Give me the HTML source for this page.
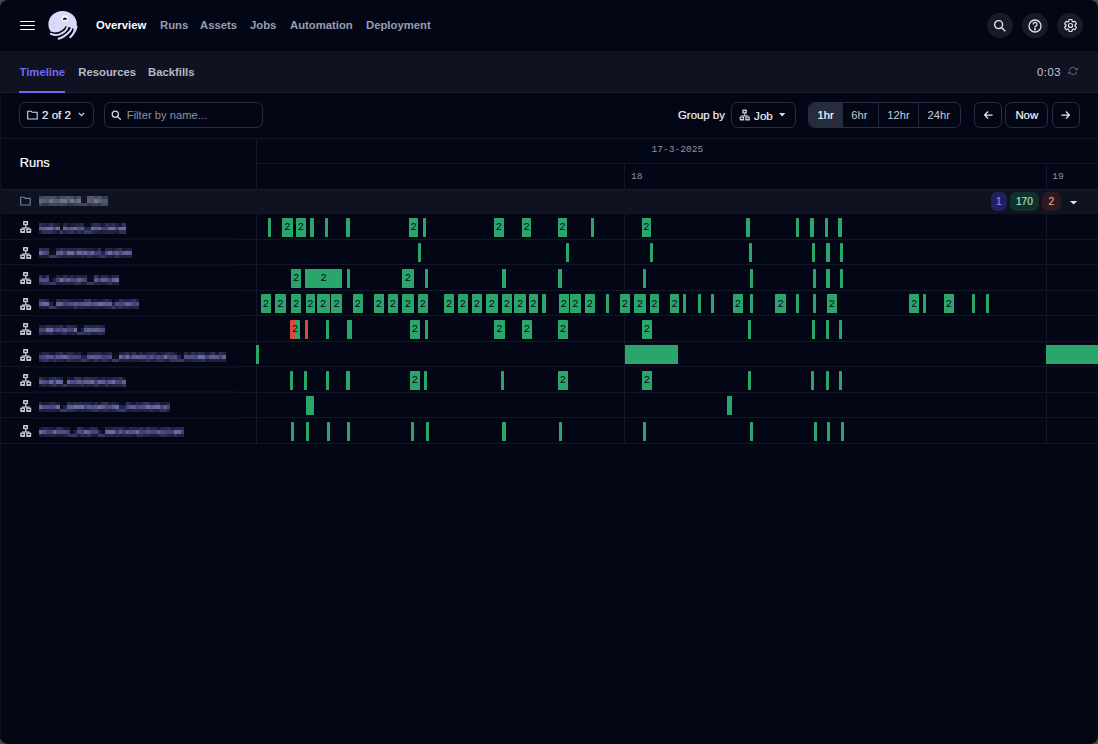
<!DOCTYPE html>
<html><head><meta charset="utf-8"><style>
html,body{margin:0;padding:0;background:#474745;}
body{width:1098px;height:744px;overflow:hidden;position:relative;font-family:"Liberation Sans",sans-serif;}
#win{position:absolute;left:0;top:0;width:1098px;height:744px;background:#030615;border-radius:8px;overflow:hidden;}
.abs{position:absolute;}
.t{position:absolute;white-space:nowrap;line-height:1;}
.nav{font-weight:700;font-size:11.3px;color:#979eb2;top:19.6px;}
.tab{font-weight:700;font-size:11.3px;color:#b6bac6;top:66.7px;}
.btn{position:absolute;border:1px solid #292f40;border-radius:6.4px;box-sizing:border-box;}
.hl{position:absolute;left:0;width:1098px;height:1px;background:#131626;}
.vl{position:absolute;width:1px;background:#131626;}
.bar{position:absolute;border-radius:0.6px;}
.bar span{position:absolute;left:0;right:0;top:4.5px;text-align:center;font-family:"Liberation Mono",monospace;font-size:10.4px;line-height:1;color:#050814;}
.circ{position:absolute;width:25.6px;height:25.6px;border-radius:50%;background:#171b29;top:12.7px;}
i{position:absolute;width:3.47px;display:block;}
.jicon{position:absolute;left:16px;width:20px;height:18px;}
.mono{font-family:"Liberation Mono",monospace;font-size:9.6px;color:#8d93a6;}
.badge{position:absolute;top:192px;height:19.2px;border-radius:6px;font-size:10.2px;line-height:19.2px;text-align:center;-webkit-text-stroke:0.15px currentColor;}
</style></head><body><div id="win">
<!-- top nav -->
<div class="abs" style="left:20.2px;top:20.7px;width:14.6px;height:1.5px;background:#fff;border-radius:1px"></div>
<div class="abs" style="left:20.2px;top:24.7px;width:14.6px;height:1.5px;background:#fff;border-radius:1px"></div>
<div class="abs" style="left:20.2px;top:28.7px;width:14.6px;height:1.5px;background:#fff;border-radius:1px"></div>
<svg class="abs" style="left:44px;top:8px" width="36" height="34" viewBox="44 8 36 34">
 <ellipse cx="62.6" cy="24.3" rx="14.2" ry="13.4" fill="#dcdafb"/>
 <path d="M44 31.3 L50.2 31.6 C 54 32.8, 57.5 32.6, 60 31.2 C 62.5 30, 64.8 28.2, 65.8 26 L69.6 27.3 L73.2 28.2 C 74 29.5, 73.5 31.8, 72.2 33.4 S 70 36, 68.6 37.6 L 66 42 L44 42 Z" fill="#030615"/>
 <path d="M50.9 33.9 C 53 34.9, 56.5 35.3, 58.9 34.6 C 61.5 33.8, 63.4 32.7, 64.6 31.6 C 66 30.2, 67.2 28.4, 67.7 26.8" stroke="#dcdafb" stroke-width="2" fill="none" stroke-linecap="round"/>
 <path d="M58.6 38.7 C 60.8 38.1, 62.8 37.2, 64.6 35.9 C 66.8 34.4, 68.8 32.6, 69.9 31.2 C 70.6 30.2, 71.2 29.2, 71.6 28" stroke="#dcdafb" stroke-width="2" fill="none" stroke-linecap="round"/>
 <path d="M70.2 37.2 C 71.4 36.2, 72.4 35.1, 73.1 33.9 C 74 32.6, 74.8 31.4, 75.3 30.2 C 75.9 29, 76.3 27.8, 76.6 26.4" stroke="#dcdafb" stroke-width="2" fill="none" stroke-linecap="round"/>
 <circle cx="65" cy="18.4" r="3" fill="#ffffff"/>
 <path d="M62.9 19.7 C 62.9 16.6, 66.9 16.6, 66.9 19.7 z" fill="#030615"/>
 <circle cx="53.8" cy="22.6" r="0.95" fill="#c5bef3"/><circle cx="51.3" cy="24.9" r="0.95" fill="#c5bef3"/><circle cx="53.8" cy="27.2" r="0.95" fill="#c5bef3"/>
</svg>
<div class="t nav" style="left:96px;color:#fff">Overview</div>
<div class="t nav" style="left:160px">Runs</div>
<div class="t nav" style="left:200px">Assets</div>
<div class="t nav" style="left:250px">Jobs</div>
<div class="t nav" style="left:290px">Automation</div>
<div class="t nav" style="left:366px">Deployment</div>
<div class="circ" style="left:987.2px"></div>
<div class="circ" style="left:1022.2px"></div>
<div class="circ" style="left:1057.2px"></div>
<svg class="abs" style="left:993px;top:19px" width="14" height="14" viewBox="0 0 14 14" fill="none" stroke="#e3e5ea" stroke-width="1.4"><circle cx="5.6" cy="5.6" r="4"/><path d="M8.5 8.5L12.3 12.3"/></svg>
<svg class="abs" style="left:1028px;top:18.5px" width="14" height="14" viewBox="0 0 14 14" fill="none" stroke="#e3e5ea" stroke-width="1.3"><circle cx="7" cy="7" r="6"/><path d="M5.1 5.4a1.95 1.95 0 1 1 2.6 1.8c-.5.2-.7.5-.7 1v.6"/><circle cx="7" cy="10.3" r=".5" fill="#e3e5ea"/></svg>
<svg class="abs" style="left:1062.5px;top:18px" width="15" height="15" viewBox="0 0 24 24" fill="none" stroke="#e3e5ea" stroke-width="1.9" stroke-linejoin="round"><path d="M19.14 12.94c.04-.3.06-.61.06-.94 0-.32-.02-.64-.07-.94l2.03-1.58c.18-.14.23-.41.12-.61l-1.92-3.32c-.12-.22-.37-.29-.59-.22l-2.39.96c-.5-.38-1.03-.7-1.62-.94l-.36-2.54c-.04-.24-.24-.41-.48-.41h-3.84c-.24 0-.43.17-.47.41l-.36 2.54c-.59.24-1.13.57-1.620.94l-2.39-.96c-.22-.08-.47 0-.59.22L2.74 8.87c-.12.21-.08.47.12.61l2.03 1.58c-.05.3-.09.63-.09.94s.02.64.07.94l-2.03 1.58c-.18.14-.23.41-.12.61l1.92 3.32c.12.22.37.29.59.22l2.39-.96c.5.38 1.030.7 1.62.94l.36 2.54c.05.24.24.41.48.41h3.84c.24 0 .44-.17.47-.41l.36-2.54c.59-.24 1.13-.56 1.62-.94l2.39.96c.22.08.47 0 .59-.22l1.92-3.32c.12-.22.07-.47-.12-.61l-2.01-1.58z"/><circle cx="12" cy="12" r="3.2"/></svg>
<!-- tabs bar -->
<div class="abs" style="left:0;top:51.2px;width:1098px;height:41.3px;background:#0f1220"></div>
<div class="abs" style="left:0;top:92.2px;width:1098px;height:1px;background:#1b2030"></div>
<div class="t tab" style="left:19.5px;color:#746aef">Timeline</div>
<div class="t tab" style="left:78.3px">Resources</div>
<div class="t tab" style="left:148px">Backfills</div>
<div class="abs" style="left:19px;top:90.6px;width:46px;height:2.2px;background:#746aef"></div>
<div class="t" style="left:1037px;top:67px;font-size:11.2px;letter-spacing:0.55px;color:#c4c8d2">0:03</div>
<svg class="abs" style="left:1067px;top:66px" width="12" height="10" viewBox="0 0 12 10" fill="none" stroke="#6b7285" stroke-width="1"><path d="M2.3 4.3A3.7 3.7 0 0 1 9.2 3.4M9.7 5.7A3.7 3.7 0 0 1 2.8 6.6"/><path d="M10.3 1.9v2H8.3M1.7 8.1v-2h2"/></svg>
<!-- toolbar -->
<div class="btn" style="left:19.1px;top:102.4px;width:74.7px;height:25.6px"></div>
<svg class="abs" style="left:26.5px;top:109.5px" width="11" height="10" viewBox="0 0 11 10" fill="none" stroke="#d8dbe2" stroke-width="1.1"><path d="M0.7 1.2h3.5l1 1.1h5v6.7h-9.5z"/></svg>
<div class="t" style="left:42px;top:109.4px;font-size:11.6px;color:#f2f3f6;-webkit-text-stroke:0.2px #f2f3f6">2 of 2</div>
<svg class="abs" style="left:78px;top:112px" width="7" height="5" viewBox="0 0 7 5" fill="none" stroke="#d8dbe2" stroke-width="1.2"><path d="M0.8 0.9L3.5 3.6L6.2 0.9"/></svg>
<div class="btn" style="left:104.2px;top:102.4px;width:159.3px;height:25.6px"></div>
<svg class="abs" style="left:111px;top:109.5px" width="11" height="11" viewBox="0 0 11 11" fill="none" stroke="#d6d9e0" stroke-width="1.25"><circle cx="4.3" cy="4.3" r="3.1"/><path d="M6.6 6.6L9.8 9.8"/></svg>
<div class="t" style="left:126.8px;top:109.8px;font-size:11.2px;color:#8b91a3">Filter by name...</div>
<div class="t" style="left:678px;top:110.1px;font-size:11.4px;color:#eef0f4;-webkit-text-stroke:0.2px #eef0f4">Group by</div>
<div class="btn" style="left:731.2px;top:102.3px;width:64.4px;height:25.6px"></div>
<div class="abs" style="left:734.5px;top:106px;transform:scale(0.92);transform-origin:10px 9px"><svg width="20" height="18" viewBox="0 0 20 18"><g fill="#c6c9d2"><rect x="7" y="2.9" width="5.1" height="4.4" rx="0.7"/><rect x="9.1" y="7" width="1.3" height="3"/><rect x="5.9" y="9.4" width="7.7" height="1.3"/><rect x="4.2" y="10.5" width="5" height="4.5" rx="0.7"/><rect x="10.2" y="10.5" width="5" height="4.5" rx="0.7"/></g><g fill="#030615"><ellipse cx="9.55" cy="5.3" rx="1.2" ry="0.7"/><ellipse cx="6.7" cy="12.6" rx="1.2" ry="0.75"/><ellipse cx="12.7" cy="12.6" rx="1.2" ry="0.75"/><rect x="9.35" y="10.7" width="0.7" height="4.4"/></g></svg></div>
<div class="t" style="left:754.1px;top:110.1px;font-size:11.6px;color:#eef0f4;-webkit-text-stroke:0.2px #eef0f4">Job</div>
<svg class="abs" style="left:779.4px;top:113px" width="7" height="4" viewBox="0 0 7 4"><path d="M0 0H6.4L3.2 3.6z" fill="#d8dbe2"/></svg>
<div class="btn" style="left:808.1px;top:102.3px;width:152.6px;height:25.6px"></div>
<div class="abs" style="left:808.6px;top:102.8px;width:33.6px;height:24.6px;background:#262c3e;border-radius:6px 0 0 6px"></div>
<div class="abs" style="left:842.2px;top:102.3px;width:1px;height:25.2px;background:#242a3a"></div>
<div class="abs" style="left:877.5px;top:102.3px;width:1px;height:25.2px;background:#242a3a"></div>
<div class="abs" style="left:918.2px;top:102.3px;width:1px;height:25.2px;background:#242a3a"></div>
<div class="t" style="left:817.6px;top:110.1px;font-size:11.2px;color:#fff;-webkit-text-stroke:0.2px #fff">1hr</div>
<div class="t" style="left:851.3px;top:110.1px;font-size:11.2px;color:#c9cdd6">6hr</div>
<div class="t" style="left:887.3px;top:110.1px;font-size:11.2px;color:#c9cdd6">12hr</div>
<div class="t" style="left:927.6px;top:110.1px;font-size:11.2px;color:#c9cdd6">24hr</div>
<div class="btn" style="left:974.1px;top:102.3px;width:27.5px;height:25.6px"></div>
<svg class="abs" style="left:983px;top:109.5px" width="11" height="10" viewBox="0 0 11 10" fill="none" stroke="#e6e8ed" stroke-width="1.25"><path d="M9.6 5H1.8M5.1 1.5L1.6 5L5.1 8.5"/></svg>
<div class="btn" style="left:1005.3px;top:102.3px;width:42.4px;height:25.6px"></div>
<div class="t" style="left:1015.4px;top:110.1px;font-size:11.4px;color:#eef0f4;-webkit-text-stroke:0.2px #eef0f4">Now</div>
<div class="btn" style="left:1052.1px;top:102.3px;width:27.7px;height:25.6px"></div>
<svg class="abs" style="left:1060px;top:109.5px" width="11" height="10" viewBox="0 0 11 10" fill="none" stroke="#e6e8ed" stroke-width="1.25"><path d="M1.4 5H9.2M5.9 1.5L9.4 5L5.9 8.5"/></svg>
<!-- timeline header -->
<div class="hl" style="top:138.3px"></div>
<div class="abs" style="left:256.9px;top:163px;width:841px;height:1px;background:#131626"></div>
<div class="vl" style="left:256px;top:138.8px;height:306px"></div>
<div class="vl" style="left:624.2px;top:163.5px;height:25.5px"></div>
<div class="vl" style="left:1046.2px;top:163.5px;height:25.5px"></div>
<div class="vl" style="left:624.2px;top:213.7px;height:230px"></div>
<div class="vl" style="left:1046.2px;top:213.7px;height:230px"></div>
<div class="t" style="left:19.8px;top:156.9px;font-size:12.8px;color:#fff;-webkit-text-stroke:0.2px #fff">Runs</div>
<div class="t mono" style="left:651.5px;top:145.4px">17-3-2025</div>
<div class="t mono" style="left:631px;top:171.7px">18</div>
<div class="t mono" style="left:1052.3px;top:171.7px">19</div>
<!-- group row -->
<div class="abs" style="left:0;top:188.9px;width:1098px;height:24.8px;background:#0f1220"></div>
<div class="hl" style="top:188.6px;background:#1b2030"></div>
<svg class="abs" style="left:20px;top:196.4px" width="11" height="10" viewBox="0 0 11 10" fill="none" stroke="#717c92" stroke-width="1.15"><path d="M0.7 1.2h3.5l1 1.1h5v6.7h-9.5z"/></svg>
<div class="badge" style="left:990.9px;width:15.9px;background:#24215a;color:#8f87ff">1</div>
<div class="badge" style="left:1010.1px;width:28.7px;background:#11302a;color:#a5e9c5">170</div>
<div class="badge" style="left:1042px;width:18.8px;background:#2d1a20;color:#f29a86">2</div>
<svg class="abs" style="left:1069.8px;top:201px" width="8" height="4" viewBox="0 0 8 4"><path d="M0 0H7.2L3.6 3.6z" fill="#e6e8ed"/></svg>
<div class="hl" style="top:213.20px"></div><div class="hl" style="top:238.70px;left:0;width:32px"></div><div class="hl" style="top:238.70px;left:238px;width:860px"></div><div class="hl" style="top:238.20px;left:32px;width:206px;height:2px;background:#0b0e1c"></div><div class="hl" style="top:264.20px;left:0;width:32px"></div><div class="hl" style="top:264.20px;left:238px;width:860px"></div><div class="hl" style="top:263.70px;left:32px;width:206px;height:2px;background:#0b0e1c"></div><div class="hl" style="top:289.70px;left:0;width:32px"></div><div class="hl" style="top:289.70px;left:238px;width:860px"></div><div class="hl" style="top:289.20px;left:32px;width:206px;height:2px;background:#0b0e1c"></div><div class="hl" style="top:315.20px;left:0;width:32px"></div><div class="hl" style="top:315.20px;left:238px;width:860px"></div><div class="hl" style="top:314.70px;left:32px;width:206px;height:2px;background:#0b0e1c"></div><div class="hl" style="top:340.70px;left:0;width:32px"></div><div class="hl" style="top:340.70px;left:238px;width:860px"></div><div class="hl" style="top:340.20px;left:32px;width:206px;height:2px;background:#0b0e1c"></div><div class="hl" style="top:366.20px;left:0;width:32px"></div><div class="hl" style="top:366.20px;left:238px;width:860px"></div><div class="hl" style="top:365.70px;left:32px;width:206px;height:2px;background:#0b0e1c"></div><div class="hl" style="top:391.70px;left:0;width:32px"></div><div class="hl" style="top:391.70px;left:238px;width:860px"></div><div class="hl" style="top:391.20px;left:32px;width:206px;height:2px;background:#0b0e1c"></div><div class="hl" style="top:417.20px;left:0;width:32px"></div><div class="hl" style="top:417.20px;left:238px;width:860px"></div><div class="hl" style="top:416.70px;left:32px;width:206px;height:2px;background:#0b0e1c"></div><div class="hl" style="top:442.70px"></div>
<div class="jicon" style="top:218.00px"><svg width="20" height="18" viewBox="0 0 20 18"><g fill="#c6c9d2"><rect x="7" y="2.9" width="5.1" height="4.4" rx="0.7"/><rect x="9.1" y="7" width="1.3" height="3"/><rect x="5.9" y="9.4" width="7.7" height="1.3"/><rect x="4.2" y="10.5" width="5" height="4.5" rx="0.7"/><rect x="10.2" y="10.5" width="5" height="4.5" rx="0.7"/></g><g fill="#030615"><ellipse cx="9.55" cy="5.3" rx="1.2" ry="0.7"/><ellipse cx="6.7" cy="12.6" rx="1.2" ry="0.75"/><ellipse cx="12.7" cy="12.6" rx="1.2" ry="0.75"/><rect x="9.35" y="10.7" width="0.7" height="4.4"/></g></svg></div><div class="jicon" style="top:243.50px"><svg width="20" height="18" viewBox="0 0 20 18"><g fill="#c6c9d2"><rect x="7" y="2.9" width="5.1" height="4.4" rx="0.7"/><rect x="9.1" y="7" width="1.3" height="3"/><rect x="5.9" y="9.4" width="7.7" height="1.3"/><rect x="4.2" y="10.5" width="5" height="4.5" rx="0.7"/><rect x="10.2" y="10.5" width="5" height="4.5" rx="0.7"/></g><g fill="#030615"><ellipse cx="9.55" cy="5.3" rx="1.2" ry="0.7"/><ellipse cx="6.7" cy="12.6" rx="1.2" ry="0.75"/><ellipse cx="12.7" cy="12.6" rx="1.2" ry="0.75"/><rect x="9.35" y="10.7" width="0.7" height="4.4"/></g></svg></div><div class="jicon" style="top:269.00px"><svg width="20" height="18" viewBox="0 0 20 18"><g fill="#c6c9d2"><rect x="7" y="2.9" width="5.1" height="4.4" rx="0.7"/><rect x="9.1" y="7" width="1.3" height="3"/><rect x="5.9" y="9.4" width="7.7" height="1.3"/><rect x="4.2" y="10.5" width="5" height="4.5" rx="0.7"/><rect x="10.2" y="10.5" width="5" height="4.5" rx="0.7"/></g><g fill="#030615"><ellipse cx="9.55" cy="5.3" rx="1.2" ry="0.7"/><ellipse cx="6.7" cy="12.6" rx="1.2" ry="0.75"/><ellipse cx="12.7" cy="12.6" rx="1.2" ry="0.75"/><rect x="9.35" y="10.7" width="0.7" height="4.4"/></g></svg></div><div class="jicon" style="top:294.50px"><svg width="20" height="18" viewBox="0 0 20 18"><g fill="#c6c9d2"><rect x="7" y="2.9" width="5.1" height="4.4" rx="0.7"/><rect x="9.1" y="7" width="1.3" height="3"/><rect x="5.9" y="9.4" width="7.7" height="1.3"/><rect x="4.2" y="10.5" width="5" height="4.5" rx="0.7"/><rect x="10.2" y="10.5" width="5" height="4.5" rx="0.7"/></g><g fill="#030615"><ellipse cx="9.55" cy="5.3" rx="1.2" ry="0.7"/><ellipse cx="6.7" cy="12.6" rx="1.2" ry="0.75"/><ellipse cx="12.7" cy="12.6" rx="1.2" ry="0.75"/><rect x="9.35" y="10.7" width="0.7" height="4.4"/></g></svg></div><div class="jicon" style="top:320.00px"><svg width="20" height="18" viewBox="0 0 20 18"><g fill="#c6c9d2"><rect x="7" y="2.9" width="5.1" height="4.4" rx="0.7"/><rect x="9.1" y="7" width="1.3" height="3"/><rect x="5.9" y="9.4" width="7.7" height="1.3"/><rect x="4.2" y="10.5" width="5" height="4.5" rx="0.7"/><rect x="10.2" y="10.5" width="5" height="4.5" rx="0.7"/></g><g fill="#030615"><ellipse cx="9.55" cy="5.3" rx="1.2" ry="0.7"/><ellipse cx="6.7" cy="12.6" rx="1.2" ry="0.75"/><ellipse cx="12.7" cy="12.6" rx="1.2" ry="0.75"/><rect x="9.35" y="10.7" width="0.7" height="4.4"/></g></svg></div><div class="jicon" style="top:345.50px"><svg width="20" height="18" viewBox="0 0 20 18"><g fill="#c6c9d2"><rect x="7" y="2.9" width="5.1" height="4.4" rx="0.7"/><rect x="9.1" y="7" width="1.3" height="3"/><rect x="5.9" y="9.4" width="7.7" height="1.3"/><rect x="4.2" y="10.5" width="5" height="4.5" rx="0.7"/><rect x="10.2" y="10.5" width="5" height="4.5" rx="0.7"/></g><g fill="#030615"><ellipse cx="9.55" cy="5.3" rx="1.2" ry="0.7"/><ellipse cx="6.7" cy="12.6" rx="1.2" ry="0.75"/><ellipse cx="12.7" cy="12.6" rx="1.2" ry="0.75"/><rect x="9.35" y="10.7" width="0.7" height="4.4"/></g></svg></div><div class="jicon" style="top:371.00px"><svg width="20" height="18" viewBox="0 0 20 18"><g fill="#c6c9d2"><rect x="7" y="2.9" width="5.1" height="4.4" rx="0.7"/><rect x="9.1" y="7" width="1.3" height="3"/><rect x="5.9" y="9.4" width="7.7" height="1.3"/><rect x="4.2" y="10.5" width="5" height="4.5" rx="0.7"/><rect x="10.2" y="10.5" width="5" height="4.5" rx="0.7"/></g><g fill="#030615"><ellipse cx="9.55" cy="5.3" rx="1.2" ry="0.7"/><ellipse cx="6.7" cy="12.6" rx="1.2" ry="0.75"/><ellipse cx="12.7" cy="12.6" rx="1.2" ry="0.75"/><rect x="9.35" y="10.7" width="0.7" height="4.4"/></g></svg></div><div class="jicon" style="top:396.50px"><svg width="20" height="18" viewBox="0 0 20 18"><g fill="#c6c9d2"><rect x="7" y="2.9" width="5.1" height="4.4" rx="0.7"/><rect x="9.1" y="7" width="1.3" height="3"/><rect x="5.9" y="9.4" width="7.7" height="1.3"/><rect x="4.2" y="10.5" width="5" height="4.5" rx="0.7"/><rect x="10.2" y="10.5" width="5" height="4.5" rx="0.7"/></g><g fill="#030615"><ellipse cx="9.55" cy="5.3" rx="1.2" ry="0.7"/><ellipse cx="6.7" cy="12.6" rx="1.2" ry="0.75"/><ellipse cx="12.7" cy="12.6" rx="1.2" ry="0.75"/><rect x="9.35" y="10.7" width="0.7" height="4.4"/></g></svg></div><div class="jicon" style="top:422.00px"><svg width="20" height="18" viewBox="0 0 20 18"><g fill="#c6c9d2"><rect x="7" y="2.9" width="5.1" height="4.4" rx="0.7"/><rect x="9.1" y="7" width="1.3" height="3"/><rect x="5.9" y="9.4" width="7.7" height="1.3"/><rect x="4.2" y="10.5" width="5" height="4.5" rx="0.7"/><rect x="10.2" y="10.5" width="5" height="4.5" rx="0.7"/></g><g fill="#030615"><ellipse cx="9.55" cy="5.3" rx="1.2" ry="0.7"/><ellipse cx="6.7" cy="12.6" rx="1.2" ry="0.75"/><ellipse cx="12.7" cy="12.6" rx="1.2" ry="0.75"/><rect x="9.35" y="10.7" width="0.7" height="4.4"/></g></svg></div>
<i style="left:39.00px;top:196.00px;height:3.2px;background:rgba(70,80,100,0.85)"></i><i style="left:39.00px;top:199.20px;height:3.9px;background:rgba(115,120,130,0.9)"></i><i style="left:39.00px;top:203.10px;height:3.1px;background:rgba(80,88,105,0.8)"></i><i style="left:42.46px;top:196.00px;height:3.2px;background:rgba(80,90,110,0.85)"></i><i style="left:42.46px;top:199.20px;height:3.9px;background:rgba(96,104,120,0.9)"></i><i style="left:42.46px;top:203.10px;height:3.1px;background:rgba(60,68,88,0.8)"></i><i style="left:45.92px;top:196.00px;height:3.2px;background:rgba(80,90,110,0.85)"></i><i style="left:45.92px;top:199.20px;height:3.9px;background:rgba(84,98,118,0.9)"></i><i style="left:45.92px;top:203.10px;height:3.1px;background:rgba(60,68,88,0.8)"></i><i style="left:49.38px;top:196.00px;height:3.2px;background:rgba(80,90,110,0.85)"></i><i style="left:49.38px;top:199.20px;height:3.9px;background:rgba(124,128,134,0.9)"></i><i style="left:49.38px;top:203.10px;height:3.1px;background:rgba(70,80,100,0.8)"></i><i style="left:52.84px;top:196.00px;height:3.2px;background:rgba(80,90,110,0.85)"></i><i style="left:52.84px;top:199.20px;height:3.9px;background:rgba(96,104,120,0.9)"></i><i style="left:52.84px;top:203.10px;height:3.1px;background:rgba(80,88,105,0.8)"></i><i style="left:56.30px;top:196.00px;height:3.2px;background:rgba(60,70,90,0.85)"></i><i style="left:56.30px;top:199.20px;height:3.9px;background:rgba(96,104,120,0.9)"></i><i style="left:56.30px;top:203.10px;height:3.1px;background:rgba(70,80,100,0.8)"></i><i style="left:59.76px;top:196.00px;height:3.2px;background:rgba(80,90,110,0.85)"></i><i style="left:59.76px;top:199.20px;height:3.9px;background:rgba(124,128,134,0.9)"></i><i style="left:59.76px;top:203.10px;height:3.1px;background:rgba(80,88,105,0.8)"></i><i style="left:63.22px;top:196.00px;height:3.2px;background:rgba(80,90,110,0.85)"></i><i style="left:63.22px;top:199.20px;height:3.9px;background:rgba(124,128,134,0.9)"></i><i style="left:63.22px;top:203.10px;height:3.1px;background:rgba(70,80,100,0.8)"></i><i style="left:66.68px;top:196.00px;height:3.2px;background:rgba(95,100,115,0.85)"></i><i style="left:66.68px;top:199.20px;height:3.9px;background:rgba(88,94,108,0.9)"></i><i style="left:66.68px;top:203.10px;height:3.1px;background:rgba(60,68,88,0.8)"></i><i style="left:70.14px;top:196.00px;height:3.2px;background:rgba(80,90,110,0.85)"></i><i style="left:70.14px;top:199.20px;height:3.9px;background:rgba(124,128,134,0.9)"></i><i style="left:70.14px;top:203.10px;height:3.1px;background:rgba(60,68,88,0.8)"></i><i style="left:73.60px;top:196.00px;height:3.2px;background:rgba(60,70,90,0.85)"></i><i style="left:73.60px;top:199.20px;height:3.9px;background:rgba(96,104,120,0.9)"></i><i style="left:73.60px;top:203.10px;height:3.1px;background:rgba(70,80,100,0.8)"></i><i style="left:77.06px;top:196.00px;height:3.2px;background:rgba(80,90,110,0.85)"></i><i style="left:77.06px;top:199.20px;height:3.9px;background:rgba(124,128,134,0.9)"></i><i style="left:77.06px;top:203.10px;height:3.1px;background:rgba(70,80,100,0.8)"></i><i style="left:80.52px;top:196.00px;height:3.2px;background:rgba(20,22,35,1)"></i><i style="left:80.52px;top:199.20px;height:3.9px;background:rgba(20,22,35,1)"></i><i style="left:80.52px;top:203.10px;height:3.1px;background:rgba(70,80,100,0.8)"></i><i style="left:83.98px;top:196.00px;height:3.2px;background:rgba(20,22,35,1)"></i><i style="left:83.98px;top:199.20px;height:3.9px;background:rgba(20,22,35,1)"></i><i style="left:83.98px;top:203.10px;height:3.1px;background:rgba(80,88,105,0.8)"></i><i style="left:87.44px;top:196.00px;height:3.2px;background:rgba(95,100,115,0.85)"></i><i style="left:87.44px;top:199.20px;height:3.9px;background:rgba(96,104,120,0.9)"></i><i style="left:87.44px;top:203.10px;height:3.1px;background:rgba(60,68,88,0.8)"></i><i style="left:90.90px;top:196.00px;height:3.2px;background:rgba(95,100,115,0.85)"></i><i style="left:90.90px;top:199.20px;height:3.9px;background:rgba(84,98,118,0.9)"></i><i style="left:90.90px;top:203.10px;height:3.1px;background:rgba(70,80,100,0.8)"></i><i style="left:94.36px;top:196.00px;height:3.2px;background:rgba(80,90,110,0.85)"></i><i style="left:94.36px;top:199.20px;height:3.9px;background:rgba(124,128,134,0.9)"></i><i style="left:94.36px;top:203.10px;height:3.1px;background:rgba(70,80,100,0.8)"></i><i style="left:97.82px;top:196.00px;height:3.2px;background:rgba(95,100,115,0.85)"></i><i style="left:97.82px;top:199.20px;height:3.9px;background:rgba(106,110,124,0.9)"></i><i style="left:97.82px;top:203.10px;height:3.1px;background:rgba(60,68,88,0.8)"></i><i style="left:101.28px;top:196.00px;height:3.2px;background:rgba(60,70,90,0.85)"></i><i style="left:101.28px;top:199.20px;height:3.9px;background:rgba(84,98,118,0.9)"></i><i style="left:101.28px;top:203.10px;height:3.1px;background:rgba(80,88,105,0.8)"></i><i style="left:104.74px;top:196.00px;height:3.2px;background:rgba(60,70,90,0.85)"></i><i style="left:104.74px;top:199.20px;height:3.9px;background:rgba(84,98,118,0.9)"></i><i style="left:104.74px;top:203.10px;height:3.1px;background:rgba(80,88,105,0.8)"></i><i style="left:39.00px;top:223.35px;height:3.2px;background:rgba(58,61,106,0.75)"></i><i style="left:39.00px;top:226.55px;height:3.9px;background:rgba(100,92,170,0.9)"></i><i style="left:39.00px;top:230.45px;height:3.1px;background:rgba(35,37,58,0.85)"></i><i style="left:42.46px;top:223.35px;height:3.2px;background:rgba(47,49,88,0.75)"></i><i style="left:42.46px;top:226.55px;height:3.9px;background:rgba(104,98,162,0.9)"></i><i style="left:42.46px;top:230.45px;height:3.1px;background:rgba(52,58,96,0.85)"></i><i style="left:45.92px;top:223.35px;height:3.2px;background:rgba(40,42,75,0.75)"></i><i style="left:45.92px;top:226.55px;height:3.9px;background:rgba(124,118,170,0.9)"></i><i style="left:45.92px;top:230.45px;height:3.1px;background:rgba(52,58,96,0.85)"></i><i style="left:49.38px;top:223.35px;height:3.2px;background:rgba(64,66,118,0.75)"></i><i style="left:49.38px;top:226.55px;height:3.9px;background:rgba(124,118,170,0.9)"></i><i style="left:49.38px;top:230.45px;height:3.1px;background:rgba(52,58,96,0.85)"></i><i style="left:52.84px;top:223.35px;height:3.2px;background:rgba(40,42,75,0.75)"></i><i style="left:52.84px;top:226.55px;height:3.9px;background:rgba(92,82,150,0.9)"></i><i style="left:52.84px;top:230.45px;height:3.1px;background:rgba(42,45,72,0.85)"></i><i style="left:56.30px;top:223.35px;height:3.2px;background:rgba(40,42,75,0.75)"></i><i style="left:56.30px;top:226.55px;height:3.9px;background:rgba(120,118,178,0.9)"></i><i style="left:56.30px;top:230.45px;height:3.1px;background:rgba(35,37,58,0.85)"></i><i style="left:59.76px;top:223.35px;height:3.2px;background:rgba(8,10,24,1)"></i><i style="left:59.76px;top:226.55px;height:3.9px;background:rgba(12,14,30,1)"></i><i style="left:59.76px;top:230.45px;height:3.1px;background:rgba(60,64,100,0.9)"></i><i style="left:63.22px;top:223.35px;height:3.2px;background:rgba(50,52,95,0.75)"></i><i style="left:63.22px;top:226.55px;height:3.9px;background:rgba(108,118,175,0.9)"></i><i style="left:63.22px;top:230.45px;height:3.1px;background:rgba(42,45,72,0.85)"></i><i style="left:66.68px;top:223.35px;height:3.2px;background:rgba(30,32,52,0.75)"></i><i style="left:66.68px;top:226.55px;height:3.9px;background:rgba(86,84,150,0.9)"></i><i style="left:66.68px;top:230.45px;height:3.1px;background:rgba(52,58,96,0.85)"></i><i style="left:70.14px;top:223.35px;height:3.2px;background:rgba(35,36,58,0.75)"></i><i style="left:70.14px;top:226.55px;height:3.9px;background:rgba(110,108,140,0.9)"></i><i style="left:70.14px;top:230.45px;height:3.1px;background:rgba(52,58,96,0.85)"></i><i style="left:73.60px;top:223.35px;height:3.2px;background:rgba(40,42,75,0.75)"></i><i style="left:73.60px;top:226.55px;height:3.9px;background:rgba(124,118,170,0.9)"></i><i style="left:73.60px;top:230.45px;height:3.1px;background:rgba(40,42,66,0.85)"></i><i style="left:77.06px;top:223.35px;height:3.2px;background:rgba(47,49,88,0.75)"></i><i style="left:77.06px;top:226.55px;height:3.9px;background:rgba(92,82,150,0.9)"></i><i style="left:77.06px;top:230.45px;height:3.1px;background:rgba(52,58,96,0.85)"></i><i style="left:80.52px;top:223.35px;height:3.2px;background:rgba(50,52,95,0.75)"></i><i style="left:80.52px;top:226.55px;height:3.9px;background:rgba(110,108,140,0.9)"></i><i style="left:80.52px;top:230.45px;height:3.1px;background:rgba(42,45,72,0.85)"></i><i style="left:83.98px;top:223.35px;height:3.2px;background:rgba(8,10,24,1)"></i><i style="left:83.98px;top:226.55px;height:3.9px;background:rgba(25,38,96,1)"></i><i style="left:83.98px;top:230.45px;height:3.1px;background:rgba(60,64,100,0.9)"></i><i style="left:87.44px;top:223.35px;height:3.2px;background:rgba(8,10,24,1)"></i><i style="left:87.44px;top:226.55px;height:3.9px;background:rgba(25,38,96,1)"></i><i style="left:87.44px;top:230.45px;height:3.1px;background:rgba(60,64,100,0.9)"></i><i style="left:90.90px;top:223.35px;height:3.2px;background:rgba(47,49,88,0.75)"></i><i style="left:90.90px;top:226.55px;height:3.9px;background:rgba(124,118,170,0.9)"></i><i style="left:90.90px;top:230.45px;height:3.1px;background:rgba(52,58,96,0.85)"></i><i style="left:94.36px;top:223.35px;height:3.2px;background:rgba(58,61,106,0.75)"></i><i style="left:94.36px;top:226.55px;height:3.9px;background:rgba(104,98,162,0.9)"></i><i style="left:94.36px;top:230.45px;height:3.1px;background:rgba(42,45,72,0.85)"></i><i style="left:97.82px;top:223.35px;height:3.2px;background:rgba(50,52,95,0.75)"></i><i style="left:97.82px;top:226.55px;height:3.9px;background:rgba(108,118,175,0.9)"></i><i style="left:97.82px;top:230.45px;height:3.1px;background:rgba(35,37,58,0.85)"></i><i style="left:101.28px;top:223.35px;height:3.2px;background:rgba(30,32,52,0.75)"></i><i style="left:101.28px;top:226.55px;height:3.9px;background:rgba(70,80,140,0.9)"></i><i style="left:101.28px;top:230.45px;height:3.1px;background:rgba(35,37,58,0.85)"></i><i style="left:104.74px;top:223.35px;height:3.2px;background:rgba(64,66,118,0.75)"></i><i style="left:104.74px;top:226.55px;height:3.9px;background:rgba(84,70,112,0.9)"></i><i style="left:104.74px;top:230.45px;height:3.1px;background:rgba(40,42,66,0.85)"></i><i style="left:108.20px;top:223.35px;height:3.2px;background:rgba(50,52,95,0.75)"></i><i style="left:108.20px;top:226.55px;height:3.9px;background:rgba(124,118,170,0.9)"></i><i style="left:108.20px;top:230.45px;height:3.1px;background:rgba(42,45,72,0.85)"></i><i style="left:111.66px;top:223.35px;height:3.2px;background:rgba(58,61,106,0.75)"></i><i style="left:111.66px;top:226.55px;height:3.9px;background:rgba(124,118,170,0.9)"></i><i style="left:111.66px;top:230.45px;height:3.1px;background:rgba(40,42,66,0.85)"></i><i style="left:115.12px;top:223.35px;height:3.2px;background:rgba(40,42,75,0.75)"></i><i style="left:115.12px;top:226.55px;height:3.9px;background:rgba(70,80,140,0.9)"></i><i style="left:115.12px;top:230.45px;height:3.1px;background:rgba(35,37,58,0.85)"></i><i style="left:118.58px;top:223.35px;height:3.2px;background:rgba(30,32,52,0.75)"></i><i style="left:118.58px;top:226.55px;height:3.9px;background:rgba(120,118,178,0.9)"></i><i style="left:118.58px;top:230.45px;height:3.1px;background:rgba(52,58,96,0.85)"></i><i style="left:122.04px;top:223.35px;height:3.2px;background:rgba(64,66,118,0.75)"></i><i style="left:122.04px;top:226.55px;height:3.9px;background:rgba(120,118,178,0.9)"></i><i style="left:122.04px;top:230.45px;height:3.1px;background:rgba(52,58,96,0.85)"></i><i style="left:39.00px;top:247.85px;height:3.2px;background:rgba(64,66,118,0.75)"></i><i style="left:39.00px;top:251.05px;height:3.9px;background:rgba(120,118,178,0.9)"></i><i style="left:39.00px;top:254.95px;height:3.1px;background:rgba(35,37,58,0.85)"></i><i style="left:42.46px;top:247.85px;height:3.2px;background:rgba(58,61,106,0.75)"></i><i style="left:42.46px;top:251.05px;height:3.9px;background:rgba(92,82,150,0.9)"></i><i style="left:42.46px;top:254.95px;height:3.1px;background:rgba(35,37,58,0.85)"></i><i style="left:45.92px;top:247.85px;height:3.2px;background:rgba(58,61,106,0.75)"></i><i style="left:45.92px;top:251.05px;height:3.9px;background:rgba(84,70,112,0.9)"></i><i style="left:45.92px;top:254.95px;height:3.1px;background:rgba(35,37,58,0.85)"></i><i style="left:49.38px;top:247.85px;height:3.2px;background:rgba(8,10,24,1)"></i><i style="left:49.38px;top:251.05px;height:3.9px;background:rgba(12,14,30,1)"></i><i style="left:49.38px;top:254.95px;height:3.1px;background:rgba(60,64,100,0.9)"></i><i style="left:52.84px;top:247.85px;height:3.2px;background:rgba(8,10,24,1)"></i><i style="left:52.84px;top:251.05px;height:3.9px;background:rgba(12,14,30,1)"></i><i style="left:52.84px;top:254.95px;height:3.1px;background:rgba(60,64,100,0.9)"></i><i style="left:56.30px;top:247.85px;height:3.2px;background:rgba(40,42,75,0.75)"></i><i style="left:56.30px;top:251.05px;height:3.9px;background:rgba(98,96,165,0.9)"></i><i style="left:56.30px;top:254.95px;height:3.1px;background:rgba(52,58,96,0.85)"></i><i style="left:59.76px;top:247.85px;height:3.2px;background:rgba(58,61,106,0.75)"></i><i style="left:59.76px;top:251.05px;height:3.9px;background:rgba(110,108,140,0.9)"></i><i style="left:59.76px;top:254.95px;height:3.1px;background:rgba(42,45,72,0.85)"></i><i style="left:63.22px;top:247.85px;height:3.2px;background:rgba(50,52,95,0.75)"></i><i style="left:63.22px;top:251.05px;height:3.9px;background:rgba(76,72,128,0.9)"></i><i style="left:63.22px;top:254.95px;height:3.1px;background:rgba(40,42,66,0.85)"></i><i style="left:66.68px;top:247.85px;height:3.2px;background:rgba(50,52,95,0.75)"></i><i style="left:66.68px;top:251.05px;height:3.9px;background:rgba(120,118,178,0.9)"></i><i style="left:66.68px;top:254.95px;height:3.1px;background:rgba(40,42,66,0.85)"></i><i style="left:70.14px;top:247.85px;height:3.2px;background:rgba(47,49,88,0.75)"></i><i style="left:70.14px;top:251.05px;height:3.9px;background:rgba(124,118,170,0.9)"></i><i style="left:70.14px;top:254.95px;height:3.1px;background:rgba(40,42,66,0.85)"></i><i style="left:73.60px;top:247.85px;height:3.2px;background:rgba(47,49,88,0.75)"></i><i style="left:73.60px;top:251.05px;height:3.9px;background:rgba(84,70,112,0.9)"></i><i style="left:73.60px;top:254.95px;height:3.1px;background:rgba(42,45,72,0.85)"></i><i style="left:77.06px;top:247.85px;height:3.2px;background:rgba(58,61,106,0.75)"></i><i style="left:77.06px;top:251.05px;height:3.9px;background:rgba(124,118,170,0.9)"></i><i style="left:77.06px;top:254.95px;height:3.1px;background:rgba(35,37,58,0.85)"></i><i style="left:80.52px;top:247.85px;height:3.2px;background:rgba(47,49,88,0.75)"></i><i style="left:80.52px;top:251.05px;height:3.9px;background:rgba(98,96,165,0.9)"></i><i style="left:80.52px;top:254.95px;height:3.1px;background:rgba(42,45,72,0.85)"></i><i style="left:83.98px;top:247.85px;height:3.2px;background:rgba(47,49,88,0.75)"></i><i style="left:83.98px;top:251.05px;height:3.9px;background:rgba(108,118,175,0.9)"></i><i style="left:83.98px;top:254.95px;height:3.1px;background:rgba(35,37,58,0.85)"></i><i style="left:87.44px;top:247.85px;height:3.2px;background:rgba(40,42,75,0.75)"></i><i style="left:87.44px;top:251.05px;height:3.9px;background:rgba(92,82,150,0.9)"></i><i style="left:87.44px;top:254.95px;height:3.1px;background:rgba(52,58,96,0.85)"></i><i style="left:90.90px;top:247.85px;height:3.2px;background:rgba(40,42,75,0.75)"></i><i style="left:90.90px;top:251.05px;height:3.9px;background:rgba(108,118,175,0.9)"></i><i style="left:90.90px;top:254.95px;height:3.1px;background:rgba(42,45,72,0.85)"></i><i style="left:94.36px;top:247.85px;height:3.2px;background:rgba(30,32,52,0.75)"></i><i style="left:94.36px;top:251.05px;height:3.9px;background:rgba(84,70,112,0.9)"></i><i style="left:94.36px;top:254.95px;height:3.1px;background:rgba(40,42,66,0.85)"></i><i style="left:97.82px;top:247.85px;height:3.2px;background:rgba(58,61,106,0.75)"></i><i style="left:97.82px;top:251.05px;height:3.9px;background:rgba(76,72,128,0.9)"></i><i style="left:97.82px;top:254.95px;height:3.1px;background:rgba(52,58,96,0.85)"></i><i style="left:101.28px;top:247.85px;height:3.2px;background:rgba(8,10,24,1)"></i><i style="left:101.28px;top:251.05px;height:3.9px;background:rgba(25,38,96,1)"></i><i style="left:101.28px;top:254.95px;height:3.1px;background:rgba(60,64,100,0.9)"></i><i style="left:104.74px;top:247.85px;height:3.2px;background:rgba(47,49,88,0.75)"></i><i style="left:104.74px;top:251.05px;height:3.9px;background:rgba(92,82,150,0.9)"></i><i style="left:104.74px;top:254.95px;height:3.1px;background:rgba(40,42,66,0.85)"></i><i style="left:108.20px;top:247.85px;height:3.2px;background:rgba(50,52,95,0.75)"></i><i style="left:108.20px;top:251.05px;height:3.9px;background:rgba(124,118,170,0.9)"></i><i style="left:108.20px;top:254.95px;height:3.1px;background:rgba(40,42,66,0.85)"></i><i style="left:111.66px;top:247.85px;height:3.2px;background:rgba(35,36,58,0.75)"></i><i style="left:111.66px;top:251.05px;height:3.9px;background:rgba(92,82,150,0.9)"></i><i style="left:111.66px;top:254.95px;height:3.1px;background:rgba(35,37,58,0.85)"></i><i style="left:115.12px;top:247.85px;height:3.2px;background:rgba(47,49,88,0.75)"></i><i style="left:115.12px;top:251.05px;height:3.9px;background:rgba(110,108,140,0.9)"></i><i style="left:115.12px;top:254.95px;height:3.1px;background:rgba(52,58,96,0.85)"></i><i style="left:118.58px;top:247.85px;height:3.2px;background:rgba(64,66,118,0.75)"></i><i style="left:118.58px;top:251.05px;height:3.9px;background:rgba(70,80,140,0.9)"></i><i style="left:118.58px;top:254.95px;height:3.1px;background:rgba(40,42,66,0.85)"></i><i style="left:122.04px;top:247.85px;height:3.2px;background:rgba(30,32,52,0.75)"></i><i style="left:122.04px;top:251.05px;height:3.9px;background:rgba(110,108,140,0.9)"></i><i style="left:122.04px;top:254.95px;height:3.1px;background:rgba(35,37,58,0.85)"></i><i style="left:125.50px;top:247.85px;height:3.2px;background:rgba(40,42,75,0.75)"></i><i style="left:125.50px;top:251.05px;height:3.9px;background:rgba(108,118,175,0.9)"></i><i style="left:125.50px;top:254.95px;height:3.1px;background:rgba(35,37,58,0.85)"></i><i style="left:128.96px;top:247.85px;height:3.2px;background:rgba(40,42,75,0.75)"></i><i style="left:128.96px;top:251.05px;height:3.9px;background:rgba(98,96,165,0.9)"></i><i style="left:128.96px;top:254.95px;height:3.1px;background:rgba(35,37,58,0.85)"></i><i style="left:39.00px;top:274.85px;height:3.2px;background:rgba(64,66,118,0.75)"></i><i style="left:39.00px;top:278.05px;height:3.9px;background:rgba(86,84,150,0.9)"></i><i style="left:39.00px;top:281.95px;height:3.1px;background:rgba(42,45,72,0.85)"></i><i style="left:42.46px;top:274.85px;height:3.2px;background:rgba(30,32,52,0.75)"></i><i style="left:42.46px;top:278.05px;height:3.9px;background:rgba(86,84,150,0.9)"></i><i style="left:42.46px;top:281.95px;height:3.1px;background:rgba(52,58,96,0.85)"></i><i style="left:45.92px;top:274.85px;height:3.2px;background:rgba(64,66,118,0.75)"></i><i style="left:45.92px;top:278.05px;height:3.9px;background:rgba(92,82,150,0.9)"></i><i style="left:45.92px;top:281.95px;height:3.1px;background:rgba(52,58,96,0.85)"></i><i style="left:49.38px;top:274.85px;height:3.2px;background:rgba(8,10,24,1)"></i><i style="left:49.38px;top:278.05px;height:3.9px;background:rgba(12,14,30,1)"></i><i style="left:49.38px;top:281.95px;height:3.1px;background:rgba(60,64,100,0.9)"></i><i style="left:52.84px;top:274.85px;height:3.2px;background:rgba(8,10,24,1)"></i><i style="left:52.84px;top:278.05px;height:3.9px;background:rgba(25,38,96,1)"></i><i style="left:52.84px;top:281.95px;height:3.1px;background:rgba(60,64,100,0.9)"></i><i style="left:56.30px;top:274.85px;height:3.2px;background:rgba(40,42,75,0.75)"></i><i style="left:56.30px;top:278.05px;height:3.9px;background:rgba(84,70,112,0.9)"></i><i style="left:56.30px;top:281.95px;height:3.1px;background:rgba(35,37,58,0.85)"></i><i style="left:59.76px;top:274.85px;height:3.2px;background:rgba(30,32,52,0.75)"></i><i style="left:59.76px;top:278.05px;height:3.9px;background:rgba(120,118,178,0.9)"></i><i style="left:59.76px;top:281.95px;height:3.1px;background:rgba(35,37,58,0.85)"></i><i style="left:63.22px;top:274.85px;height:3.2px;background:rgba(58,61,106,0.75)"></i><i style="left:63.22px;top:278.05px;height:3.9px;background:rgba(86,84,150,0.9)"></i><i style="left:63.22px;top:281.95px;height:3.1px;background:rgba(40,42,66,0.85)"></i><i style="left:66.68px;top:274.85px;height:3.2px;background:rgba(35,36,58,0.75)"></i><i style="left:66.68px;top:278.05px;height:3.9px;background:rgba(110,108,140,0.9)"></i><i style="left:66.68px;top:281.95px;height:3.1px;background:rgba(42,45,72,0.85)"></i><i style="left:70.14px;top:274.85px;height:3.2px;background:rgba(47,49,88,0.75)"></i><i style="left:70.14px;top:278.05px;height:3.9px;background:rgba(70,80,140,0.9)"></i><i style="left:70.14px;top:281.95px;height:3.1px;background:rgba(40,42,66,0.85)"></i><i style="left:73.60px;top:274.85px;height:3.2px;background:rgba(35,36,58,0.75)"></i><i style="left:73.60px;top:278.05px;height:3.9px;background:rgba(84,70,112,0.9)"></i><i style="left:73.60px;top:281.95px;height:3.1px;background:rgba(52,58,96,0.85)"></i><i style="left:77.06px;top:274.85px;height:3.2px;background:rgba(50,52,95,0.75)"></i><i style="left:77.06px;top:278.05px;height:3.9px;background:rgba(110,108,140,0.9)"></i><i style="left:77.06px;top:281.95px;height:3.1px;background:rgba(52,58,96,0.85)"></i><i style="left:80.52px;top:274.85px;height:3.2px;background:rgba(35,36,58,0.75)"></i><i style="left:80.52px;top:278.05px;height:3.9px;background:rgba(92,82,150,0.9)"></i><i style="left:80.52px;top:281.95px;height:3.1px;background:rgba(35,37,58,0.85)"></i><i style="left:83.98px;top:274.85px;height:3.2px;background:rgba(47,49,88,0.75)"></i><i style="left:83.98px;top:278.05px;height:3.9px;background:rgba(84,70,112,0.9)"></i><i style="left:83.98px;top:281.95px;height:3.1px;background:rgba(40,42,66,0.85)"></i><i style="left:87.44px;top:274.85px;height:3.2px;background:rgba(8,10,24,1)"></i><i style="left:87.44px;top:278.05px;height:3.9px;background:rgba(12,14,30,1)"></i><i style="left:87.44px;top:281.95px;height:3.1px;background:rgba(60,64,100,0.9)"></i><i style="left:90.90px;top:274.85px;height:3.2px;background:rgba(8,10,24,1)"></i><i style="left:90.90px;top:278.05px;height:3.9px;background:rgba(12,14,30,1)"></i><i style="left:90.90px;top:281.95px;height:3.1px;background:rgba(60,64,100,0.9)"></i><i style="left:94.36px;top:274.85px;height:3.2px;background:rgba(64,66,118,0.75)"></i><i style="left:94.36px;top:278.05px;height:3.9px;background:rgba(98,96,165,0.9)"></i><i style="left:94.36px;top:281.95px;height:3.1px;background:rgba(42,45,72,0.85)"></i><i style="left:97.82px;top:274.85px;height:3.2px;background:rgba(30,32,52,0.75)"></i><i style="left:97.82px;top:278.05px;height:3.9px;background:rgba(76,72,128,0.9)"></i><i style="left:97.82px;top:281.95px;height:3.1px;background:rgba(42,45,72,0.85)"></i><i style="left:101.28px;top:274.85px;height:3.2px;background:rgba(50,52,95,0.75)"></i><i style="left:101.28px;top:278.05px;height:3.9px;background:rgba(110,108,140,0.9)"></i><i style="left:101.28px;top:281.95px;height:3.1px;background:rgba(35,37,58,0.85)"></i><i style="left:104.74px;top:274.85px;height:3.2px;background:rgba(50,52,95,0.75)"></i><i style="left:104.74px;top:278.05px;height:3.9px;background:rgba(100,92,170,0.9)"></i><i style="left:104.74px;top:281.95px;height:3.1px;background:rgba(40,42,66,0.85)"></i><i style="left:108.20px;top:274.85px;height:3.2px;background:rgba(30,32,52,0.75)"></i><i style="left:108.20px;top:278.05px;height:3.9px;background:rgba(76,72,128,0.9)"></i><i style="left:108.20px;top:281.95px;height:3.1px;background:rgba(52,58,96,0.85)"></i><i style="left:111.66px;top:274.85px;height:3.2px;background:rgba(47,49,88,0.75)"></i><i style="left:111.66px;top:278.05px;height:3.9px;background:rgba(110,108,140,0.9)"></i><i style="left:111.66px;top:281.95px;height:3.1px;background:rgba(40,42,66,0.85)"></i><i style="left:115.12px;top:274.85px;height:3.2px;background:rgba(50,52,95,0.75)"></i><i style="left:115.12px;top:278.05px;height:3.9px;background:rgba(120,118,178,0.9)"></i><i style="left:115.12px;top:281.95px;height:3.1px;background:rgba(42,45,72,0.85)"></i><i style="left:39.00px;top:299.05px;height:3.2px;background:rgba(64,66,118,0.75)"></i><i style="left:39.00px;top:302.25px;height:3.9px;background:rgba(100,92,170,0.9)"></i><i style="left:39.00px;top:306.15px;height:3.1px;background:rgba(35,37,58,0.85)"></i><i style="left:42.46px;top:299.05px;height:3.2px;background:rgba(58,61,106,0.75)"></i><i style="left:42.46px;top:302.25px;height:3.9px;background:rgba(108,118,175,0.9)"></i><i style="left:42.46px;top:306.15px;height:3.1px;background:rgba(35,37,58,0.85)"></i><i style="left:45.92px;top:299.05px;height:3.2px;background:rgba(40,42,75,0.75)"></i><i style="left:45.92px;top:302.25px;height:3.9px;background:rgba(124,118,170,0.9)"></i><i style="left:45.92px;top:306.15px;height:3.1px;background:rgba(35,37,58,0.85)"></i><i style="left:49.38px;top:299.05px;height:3.2px;background:rgba(8,10,24,1)"></i><i style="left:49.38px;top:302.25px;height:3.9px;background:rgba(25,38,96,1)"></i><i style="left:49.38px;top:306.15px;height:3.1px;background:rgba(60,64,100,0.9)"></i><i style="left:52.84px;top:299.05px;height:3.2px;background:rgba(8,10,24,1)"></i><i style="left:52.84px;top:302.25px;height:3.9px;background:rgba(12,14,30,1)"></i><i style="left:52.84px;top:306.15px;height:3.1px;background:rgba(60,64,100,0.9)"></i><i style="left:56.30px;top:299.05px;height:3.2px;background:rgba(47,49,88,0.75)"></i><i style="left:56.30px;top:302.25px;height:3.9px;background:rgba(110,108,140,0.9)"></i><i style="left:56.30px;top:306.15px;height:3.1px;background:rgba(42,45,72,0.85)"></i><i style="left:59.76px;top:299.05px;height:3.2px;background:rgba(40,42,75,0.75)"></i><i style="left:59.76px;top:302.25px;height:3.9px;background:rgba(110,108,140,0.9)"></i><i style="left:59.76px;top:306.15px;height:3.1px;background:rgba(35,37,58,0.85)"></i><i style="left:63.22px;top:299.05px;height:3.2px;background:rgba(50,52,95,0.75)"></i><i style="left:63.22px;top:302.25px;height:3.9px;background:rgba(84,70,112,0.9)"></i><i style="left:63.22px;top:306.15px;height:3.1px;background:rgba(35,37,58,0.85)"></i><i style="left:66.68px;top:299.05px;height:3.2px;background:rgba(47,49,88,0.75)"></i><i style="left:66.68px;top:302.25px;height:3.9px;background:rgba(70,80,140,0.9)"></i><i style="left:66.68px;top:306.15px;height:3.1px;background:rgba(35,37,58,0.85)"></i><i style="left:70.14px;top:299.05px;height:3.2px;background:rgba(35,36,58,0.75)"></i><i style="left:70.14px;top:302.25px;height:3.9px;background:rgba(86,84,150,0.9)"></i><i style="left:70.14px;top:306.15px;height:3.1px;background:rgba(35,37,58,0.85)"></i><i style="left:73.60px;top:299.05px;height:3.2px;background:rgba(30,32,52,0.75)"></i><i style="left:73.60px;top:302.25px;height:3.9px;background:rgba(104,98,162,0.9)"></i><i style="left:73.60px;top:306.15px;height:3.1px;background:rgba(52,58,96,0.85)"></i><i style="left:77.06px;top:299.05px;height:3.2px;background:rgba(35,36,58,0.75)"></i><i style="left:77.06px;top:302.25px;height:3.9px;background:rgba(86,84,150,0.9)"></i><i style="left:77.06px;top:306.15px;height:3.1px;background:rgba(40,42,66,0.85)"></i><i style="left:80.52px;top:299.05px;height:3.2px;background:rgba(30,32,52,0.75)"></i><i style="left:80.52px;top:302.25px;height:3.9px;background:rgba(100,92,170,0.9)"></i><i style="left:80.52px;top:306.15px;height:3.1px;background:rgba(42,45,72,0.85)"></i><i style="left:83.98px;top:299.05px;height:3.2px;background:rgba(64,66,118,0.75)"></i><i style="left:83.98px;top:302.25px;height:3.9px;background:rgba(98,96,165,0.9)"></i><i style="left:83.98px;top:306.15px;height:3.1px;background:rgba(40,42,66,0.85)"></i><i style="left:87.44px;top:299.05px;height:3.2px;background:rgba(64,66,118,0.75)"></i><i style="left:87.44px;top:302.25px;height:3.9px;background:rgba(104,98,162,0.9)"></i><i style="left:87.44px;top:306.15px;height:3.1px;background:rgba(40,42,66,0.85)"></i><i style="left:90.90px;top:299.05px;height:3.2px;background:rgba(30,32,52,0.75)"></i><i style="left:90.90px;top:302.25px;height:3.9px;background:rgba(86,84,150,0.9)"></i><i style="left:90.90px;top:306.15px;height:3.1px;background:rgba(35,37,58,0.85)"></i><i style="left:94.36px;top:299.05px;height:3.2px;background:rgba(40,42,75,0.75)"></i><i style="left:94.36px;top:302.25px;height:3.9px;background:rgba(100,92,170,0.9)"></i><i style="left:94.36px;top:306.15px;height:3.1px;background:rgba(42,45,72,0.85)"></i><i style="left:97.82px;top:299.05px;height:3.2px;background:rgba(30,32,52,0.75)"></i><i style="left:97.82px;top:302.25px;height:3.9px;background:rgba(124,118,170,0.9)"></i><i style="left:97.82px;top:306.15px;height:3.1px;background:rgba(35,37,58,0.85)"></i><i style="left:101.28px;top:299.05px;height:3.2px;background:rgba(40,42,75,0.75)"></i><i style="left:101.28px;top:302.25px;height:3.9px;background:rgba(108,118,175,0.9)"></i><i style="left:101.28px;top:306.15px;height:3.1px;background:rgba(35,37,58,0.85)"></i><i style="left:104.74px;top:299.05px;height:3.2px;background:rgba(58,61,106,0.75)"></i><i style="left:104.74px;top:302.25px;height:3.9px;background:rgba(100,92,170,0.9)"></i><i style="left:104.74px;top:306.15px;height:3.1px;background:rgba(40,42,66,0.85)"></i><i style="left:108.20px;top:299.05px;height:3.2px;background:rgba(40,42,75,0.75)"></i><i style="left:108.20px;top:302.25px;height:3.9px;background:rgba(110,108,140,0.9)"></i><i style="left:108.20px;top:306.15px;height:3.1px;background:rgba(42,45,72,0.85)"></i><i style="left:111.66px;top:299.05px;height:3.2px;background:rgba(8,10,24,1)"></i><i style="left:111.66px;top:302.25px;height:3.9px;background:rgba(25,38,96,1)"></i><i style="left:111.66px;top:306.15px;height:3.1px;background:rgba(60,64,100,0.9)"></i><i style="left:115.12px;top:299.05px;height:3.2px;background:rgba(30,32,52,0.75)"></i><i style="left:115.12px;top:302.25px;height:3.9px;background:rgba(92,82,150,0.9)"></i><i style="left:115.12px;top:306.15px;height:3.1px;background:rgba(42,45,72,0.85)"></i><i style="left:118.58px;top:299.05px;height:3.2px;background:rgba(58,61,106,0.75)"></i><i style="left:118.58px;top:302.25px;height:3.9px;background:rgba(84,70,112,0.9)"></i><i style="left:118.58px;top:306.15px;height:3.1px;background:rgba(52,58,96,0.85)"></i><i style="left:122.04px;top:299.05px;height:3.2px;background:rgba(47,49,88,0.75)"></i><i style="left:122.04px;top:302.25px;height:3.9px;background:rgba(92,82,150,0.9)"></i><i style="left:122.04px;top:306.15px;height:3.1px;background:rgba(40,42,66,0.85)"></i><i style="left:125.50px;top:299.05px;height:3.2px;background:rgba(40,42,75,0.75)"></i><i style="left:125.50px;top:302.25px;height:3.9px;background:rgba(108,118,175,0.9)"></i><i style="left:125.50px;top:306.15px;height:3.1px;background:rgba(42,45,72,0.85)"></i><i style="left:128.96px;top:299.05px;height:3.2px;background:rgba(50,52,95,0.75)"></i><i style="left:128.96px;top:302.25px;height:3.9px;background:rgba(98,96,165,0.9)"></i><i style="left:128.96px;top:306.15px;height:3.1px;background:rgba(35,37,58,0.85)"></i><i style="left:132.42px;top:299.05px;height:3.2px;background:rgba(64,66,118,0.75)"></i><i style="left:132.42px;top:302.25px;height:3.9px;background:rgba(70,80,140,0.9)"></i><i style="left:132.42px;top:306.15px;height:3.1px;background:rgba(40,42,66,0.85)"></i><i style="left:135.88px;top:299.05px;height:3.2px;background:rgba(40,42,75,0.75)"></i><i style="left:135.88px;top:302.25px;height:3.9px;background:rgba(86,84,150,0.9)"></i><i style="left:135.88px;top:306.15px;height:3.1px;background:rgba(40,42,66,0.85)"></i><i style="left:39.00px;top:324.55px;height:3.2px;background:rgba(40,42,75,0.75)"></i><i style="left:39.00px;top:327.75px;height:3.9px;background:rgba(84,70,112,0.9)"></i><i style="left:39.00px;top:331.65px;height:3.1px;background:rgba(52,58,96,0.85)"></i><i style="left:42.46px;top:324.55px;height:3.2px;background:rgba(40,42,75,0.75)"></i><i style="left:42.46px;top:327.75px;height:3.9px;background:rgba(84,70,112,0.9)"></i><i style="left:42.46px;top:331.65px;height:3.1px;background:rgba(40,42,66,0.85)"></i><i style="left:45.92px;top:324.55px;height:3.2px;background:rgba(58,61,106,0.75)"></i><i style="left:45.92px;top:327.75px;height:3.9px;background:rgba(120,118,178,0.9)"></i><i style="left:45.92px;top:331.65px;height:3.1px;background:rgba(42,45,72,0.85)"></i><i style="left:49.38px;top:324.55px;height:3.2px;background:rgba(50,52,95,0.75)"></i><i style="left:49.38px;top:327.75px;height:3.9px;background:rgba(124,118,170,0.9)"></i><i style="left:49.38px;top:331.65px;height:3.1px;background:rgba(52,58,96,0.85)"></i><i style="left:52.84px;top:324.55px;height:3.2px;background:rgba(47,49,88,0.75)"></i><i style="left:52.84px;top:327.75px;height:3.9px;background:rgba(76,72,128,0.9)"></i><i style="left:52.84px;top:331.65px;height:3.1px;background:rgba(35,37,58,0.85)"></i><i style="left:56.30px;top:324.55px;height:3.2px;background:rgba(50,52,95,0.75)"></i><i style="left:56.30px;top:327.75px;height:3.9px;background:rgba(92,82,150,0.9)"></i><i style="left:56.30px;top:331.65px;height:3.1px;background:rgba(35,37,58,0.85)"></i><i style="left:59.76px;top:324.55px;height:3.2px;background:rgba(64,66,118,0.75)"></i><i style="left:59.76px;top:327.75px;height:3.9px;background:rgba(70,80,140,0.9)"></i><i style="left:59.76px;top:331.65px;height:3.1px;background:rgba(42,45,72,0.85)"></i><i style="left:63.22px;top:324.55px;height:3.2px;background:rgba(30,32,52,0.75)"></i><i style="left:63.22px;top:327.75px;height:3.9px;background:rgba(100,92,170,0.9)"></i><i style="left:63.22px;top:331.65px;height:3.1px;background:rgba(52,58,96,0.85)"></i><i style="left:66.68px;top:324.55px;height:3.2px;background:rgba(58,61,106,0.75)"></i><i style="left:66.68px;top:327.75px;height:3.9px;background:rgba(70,80,140,0.9)"></i><i style="left:66.68px;top:331.65px;height:3.1px;background:rgba(35,37,58,0.85)"></i><i style="left:70.14px;top:324.55px;height:3.2px;background:rgba(50,52,95,0.75)"></i><i style="left:70.14px;top:327.75px;height:3.9px;background:rgba(84,70,112,0.9)"></i><i style="left:70.14px;top:331.65px;height:3.1px;background:rgba(42,45,72,0.85)"></i><i style="left:73.60px;top:324.55px;height:3.2px;background:rgba(50,52,95,0.75)"></i><i style="left:73.60px;top:327.75px;height:3.9px;background:rgba(124,118,170,0.9)"></i><i style="left:73.60px;top:331.65px;height:3.1px;background:rgba(35,37,58,0.85)"></i><i style="left:77.06px;top:324.55px;height:3.2px;background:rgba(8,10,24,1)"></i><i style="left:77.06px;top:327.75px;height:3.9px;background:rgba(12,14,30,1)"></i><i style="left:77.06px;top:331.65px;height:3.1px;background:rgba(60,64,100,0.9)"></i><i style="left:80.52px;top:324.55px;height:3.2px;background:rgba(8,10,24,1)"></i><i style="left:80.52px;top:327.75px;height:3.9px;background:rgba(25,38,96,1)"></i><i style="left:80.52px;top:331.65px;height:3.1px;background:rgba(60,64,100,0.9)"></i><i style="left:83.98px;top:324.55px;height:3.2px;background:rgba(58,61,106,0.75)"></i><i style="left:83.98px;top:327.75px;height:3.9px;background:rgba(98,96,165,0.9)"></i><i style="left:83.98px;top:331.65px;height:3.1px;background:rgba(52,58,96,0.85)"></i><i style="left:87.44px;top:324.55px;height:3.2px;background:rgba(47,49,88,0.75)"></i><i style="left:87.44px;top:327.75px;height:3.9px;background:rgba(110,108,140,0.9)"></i><i style="left:87.44px;top:331.65px;height:3.1px;background:rgba(52,58,96,0.85)"></i><i style="left:90.90px;top:324.55px;height:3.2px;background:rgba(47,49,88,0.75)"></i><i style="left:90.90px;top:327.75px;height:3.9px;background:rgba(98,96,165,0.9)"></i><i style="left:90.90px;top:331.65px;height:3.1px;background:rgba(40,42,66,0.85)"></i><i style="left:94.36px;top:324.55px;height:3.2px;background:rgba(50,52,95,0.75)"></i><i style="left:94.36px;top:327.75px;height:3.9px;background:rgba(110,108,140,0.9)"></i><i style="left:94.36px;top:331.65px;height:3.1px;background:rgba(42,45,72,0.85)"></i><i style="left:97.82px;top:324.55px;height:3.2px;background:rgba(50,52,95,0.75)"></i><i style="left:97.82px;top:327.75px;height:3.9px;background:rgba(98,96,165,0.9)"></i><i style="left:97.82px;top:331.65px;height:3.1px;background:rgba(52,58,96,0.85)"></i><i style="left:101.28px;top:324.55px;height:3.2px;background:rgba(40,42,75,0.75)"></i><i style="left:101.28px;top:327.75px;height:3.9px;background:rgba(92,82,150,0.9)"></i><i style="left:101.28px;top:331.65px;height:3.1px;background:rgba(42,45,72,0.85)"></i><i style="left:39.00px;top:351.85px;height:3.2px;background:rgba(30,32,52,0.75)"></i><i style="left:39.00px;top:355.05px;height:3.9px;background:rgba(84,70,112,0.9)"></i><i style="left:39.00px;top:358.95px;height:3.1px;background:rgba(42,45,72,0.85)"></i><i style="left:42.46px;top:351.85px;height:3.2px;background:rgba(47,49,88,0.75)"></i><i style="left:42.46px;top:355.05px;height:3.9px;background:rgba(70,80,140,0.9)"></i><i style="left:42.46px;top:358.95px;height:3.1px;background:rgba(52,58,96,0.85)"></i><i style="left:45.92px;top:351.85px;height:3.2px;background:rgba(47,49,88,0.75)"></i><i style="left:45.92px;top:355.05px;height:3.9px;background:rgba(100,92,170,0.9)"></i><i style="left:45.92px;top:358.95px;height:3.1px;background:rgba(52,58,96,0.85)"></i><i style="left:49.38px;top:351.85px;height:3.2px;background:rgba(30,32,52,0.75)"></i><i style="left:49.38px;top:355.05px;height:3.9px;background:rgba(100,92,170,0.9)"></i><i style="left:49.38px;top:358.95px;height:3.1px;background:rgba(40,42,66,0.85)"></i><i style="left:52.84px;top:351.85px;height:3.2px;background:rgba(30,32,52,0.75)"></i><i style="left:52.84px;top:355.05px;height:3.9px;background:rgba(76,72,128,0.9)"></i><i style="left:52.84px;top:358.95px;height:3.1px;background:rgba(52,58,96,0.85)"></i><i style="left:56.30px;top:351.85px;height:3.2px;background:rgba(50,52,95,0.75)"></i><i style="left:56.30px;top:355.05px;height:3.9px;background:rgba(100,92,170,0.9)"></i><i style="left:56.30px;top:358.95px;height:3.1px;background:rgba(40,42,66,0.85)"></i><i style="left:59.76px;top:351.85px;height:3.2px;background:rgba(64,66,118,0.75)"></i><i style="left:59.76px;top:355.05px;height:3.9px;background:rgba(98,96,165,0.9)"></i><i style="left:59.76px;top:358.95px;height:3.1px;background:rgba(42,45,72,0.85)"></i><i style="left:63.22px;top:351.85px;height:3.2px;background:rgba(35,36,58,0.75)"></i><i style="left:63.22px;top:355.05px;height:3.9px;background:rgba(108,118,175,0.9)"></i><i style="left:63.22px;top:358.95px;height:3.1px;background:rgba(35,37,58,0.85)"></i><i style="left:66.68px;top:351.85px;height:3.2px;background:rgba(50,52,95,0.75)"></i><i style="left:66.68px;top:355.05px;height:3.9px;background:rgba(92,82,150,0.9)"></i><i style="left:66.68px;top:358.95px;height:3.1px;background:rgba(52,58,96,0.85)"></i><i style="left:70.14px;top:351.85px;height:3.2px;background:rgba(47,49,88,0.75)"></i><i style="left:70.14px;top:355.05px;height:3.9px;background:rgba(76,72,128,0.9)"></i><i style="left:70.14px;top:358.95px;height:3.1px;background:rgba(42,45,72,0.85)"></i><i style="left:73.60px;top:351.85px;height:3.2px;background:rgba(30,32,52,0.75)"></i><i style="left:73.60px;top:355.05px;height:3.9px;background:rgba(70,80,140,0.9)"></i><i style="left:73.60px;top:358.95px;height:3.1px;background:rgba(42,45,72,0.85)"></i><i style="left:77.06px;top:351.85px;height:3.2px;background:rgba(40,42,75,0.75)"></i><i style="left:77.06px;top:355.05px;height:3.9px;background:rgba(84,70,112,0.9)"></i><i style="left:77.06px;top:358.95px;height:3.1px;background:rgba(42,45,72,0.85)"></i><i style="left:80.52px;top:351.85px;height:3.2px;background:rgba(8,10,24,1)"></i><i style="left:80.52px;top:355.05px;height:3.9px;background:rgba(25,38,96,1)"></i><i style="left:80.52px;top:358.95px;height:3.1px;background:rgba(60,64,100,0.9)"></i><i style="left:83.98px;top:351.85px;height:3.2px;background:rgba(8,10,24,1)"></i><i style="left:83.98px;top:355.05px;height:3.9px;background:rgba(25,38,96,1)"></i><i style="left:83.98px;top:358.95px;height:3.1px;background:rgba(60,64,100,0.9)"></i><i style="left:87.44px;top:351.85px;height:3.2px;background:rgba(40,42,75,0.75)"></i><i style="left:87.44px;top:355.05px;height:3.9px;background:rgba(100,92,170,0.9)"></i><i style="left:87.44px;top:358.95px;height:3.1px;background:rgba(42,45,72,0.85)"></i><i style="left:90.90px;top:351.85px;height:3.2px;background:rgba(40,42,75,0.75)"></i><i style="left:90.90px;top:355.05px;height:3.9px;background:rgba(110,108,140,0.9)"></i><i style="left:90.90px;top:358.95px;height:3.1px;background:rgba(35,37,58,0.85)"></i><i style="left:94.36px;top:351.85px;height:3.2px;background:rgba(47,49,88,0.75)"></i><i style="left:94.36px;top:355.05px;height:3.9px;background:rgba(100,92,170,0.9)"></i><i style="left:94.36px;top:358.95px;height:3.1px;background:rgba(52,58,96,0.85)"></i><i style="left:97.82px;top:351.85px;height:3.2px;background:rgba(47,49,88,0.75)"></i><i style="left:97.82px;top:355.05px;height:3.9px;background:rgba(100,92,170,0.9)"></i><i style="left:97.82px;top:358.95px;height:3.1px;background:rgba(35,37,58,0.85)"></i><i style="left:101.28px;top:351.85px;height:3.2px;background:rgba(35,36,58,0.75)"></i><i style="left:101.28px;top:355.05px;height:3.9px;background:rgba(76,72,128,0.9)"></i><i style="left:101.28px;top:358.95px;height:3.1px;background:rgba(52,58,96,0.85)"></i><i style="left:104.74px;top:351.85px;height:3.2px;background:rgba(40,42,75,0.75)"></i><i style="left:104.74px;top:355.05px;height:3.9px;background:rgba(84,70,112,0.9)"></i><i style="left:104.74px;top:358.95px;height:3.1px;background:rgba(52,58,96,0.85)"></i><i style="left:108.20px;top:351.85px;height:3.2px;background:rgba(50,52,95,0.75)"></i><i style="left:108.20px;top:355.05px;height:3.9px;background:rgba(86,84,150,0.9)"></i><i style="left:108.20px;top:358.95px;height:3.1px;background:rgba(35,37,58,0.85)"></i><i style="left:111.66px;top:351.85px;height:3.2px;background:rgba(8,10,24,1)"></i><i style="left:111.66px;top:355.05px;height:3.9px;background:rgba(12,14,30,1)"></i><i style="left:111.66px;top:358.95px;height:3.1px;background:rgba(60,64,100,0.9)"></i><i style="left:115.12px;top:351.85px;height:3.2px;background:rgba(8,10,24,1)"></i><i style="left:115.12px;top:355.05px;height:3.9px;background:rgba(12,14,30,1)"></i><i style="left:115.12px;top:358.95px;height:3.1px;background:rgba(60,64,100,0.9)"></i><i style="left:118.58px;top:351.85px;height:3.2px;background:rgba(40,42,75,0.75)"></i><i style="left:118.58px;top:355.05px;height:3.9px;background:rgba(124,118,170,0.9)"></i><i style="left:118.58px;top:358.95px;height:3.1px;background:rgba(35,37,58,0.85)"></i><i style="left:122.04px;top:351.85px;height:3.2px;background:rgba(50,52,95,0.75)"></i><i style="left:122.04px;top:355.05px;height:3.9px;background:rgba(92,82,150,0.9)"></i><i style="left:122.04px;top:358.95px;height:3.1px;background:rgba(40,42,66,0.85)"></i><i style="left:125.50px;top:351.85px;height:3.2px;background:rgba(64,66,118,0.75)"></i><i style="left:125.50px;top:355.05px;height:3.9px;background:rgba(124,118,170,0.9)"></i><i style="left:125.50px;top:358.95px;height:3.1px;background:rgba(40,42,66,0.85)"></i><i style="left:128.96px;top:351.85px;height:3.2px;background:rgba(40,42,75,0.75)"></i><i style="left:128.96px;top:355.05px;height:3.9px;background:rgba(70,80,140,0.9)"></i><i style="left:128.96px;top:358.95px;height:3.1px;background:rgba(35,37,58,0.85)"></i><i style="left:132.42px;top:351.85px;height:3.2px;background:rgba(58,61,106,0.75)"></i><i style="left:132.42px;top:355.05px;height:3.9px;background:rgba(98,96,165,0.9)"></i><i style="left:132.42px;top:358.95px;height:3.1px;background:rgba(35,37,58,0.85)"></i><i style="left:135.88px;top:351.85px;height:3.2px;background:rgba(30,32,52,0.75)"></i><i style="left:135.88px;top:355.05px;height:3.9px;background:rgba(110,108,140,0.9)"></i><i style="left:135.88px;top:358.95px;height:3.1px;background:rgba(35,37,58,0.85)"></i><i style="left:139.34px;top:351.85px;height:3.2px;background:rgba(50,52,95,0.75)"></i><i style="left:139.34px;top:355.05px;height:3.9px;background:rgba(98,96,165,0.9)"></i><i style="left:139.34px;top:358.95px;height:3.1px;background:rgba(42,45,72,0.85)"></i><i style="left:142.80px;top:351.85px;height:3.2px;background:rgba(30,32,52,0.75)"></i><i style="left:142.80px;top:355.05px;height:3.9px;background:rgba(100,92,170,0.9)"></i><i style="left:142.80px;top:358.95px;height:3.1px;background:rgba(42,45,72,0.85)"></i><i style="left:146.26px;top:351.85px;height:3.2px;background:rgba(47,49,88,0.75)"></i><i style="left:146.26px;top:355.05px;height:3.9px;background:rgba(76,72,128,0.9)"></i><i style="left:146.26px;top:358.95px;height:3.1px;background:rgba(52,58,96,0.85)"></i><i style="left:149.72px;top:351.85px;height:3.2px;background:rgba(50,52,95,0.75)"></i><i style="left:149.72px;top:355.05px;height:3.9px;background:rgba(100,92,170,0.9)"></i><i style="left:149.72px;top:358.95px;height:3.1px;background:rgba(42,45,72,0.85)"></i><i style="left:153.18px;top:351.85px;height:3.2px;background:rgba(47,49,88,0.75)"></i><i style="left:153.18px;top:355.05px;height:3.9px;background:rgba(76,72,128,0.9)"></i><i style="left:153.18px;top:358.95px;height:3.1px;background:rgba(40,42,66,0.85)"></i><i style="left:156.64px;top:351.85px;height:3.2px;background:rgba(30,32,52,0.75)"></i><i style="left:156.64px;top:355.05px;height:3.9px;background:rgba(86,84,150,0.9)"></i><i style="left:156.64px;top:358.95px;height:3.1px;background:rgba(52,58,96,0.85)"></i><i style="left:160.10px;top:351.85px;height:3.2px;background:rgba(40,42,75,0.75)"></i><i style="left:160.10px;top:355.05px;height:3.9px;background:rgba(84,70,112,0.9)"></i><i style="left:160.10px;top:358.95px;height:3.1px;background:rgba(52,58,96,0.85)"></i><i style="left:163.56px;top:351.85px;height:3.2px;background:rgba(47,49,88,0.75)"></i><i style="left:163.56px;top:355.05px;height:3.9px;background:rgba(124,118,170,0.9)"></i><i style="left:163.56px;top:358.95px;height:3.1px;background:rgba(35,37,58,0.85)"></i><i style="left:167.02px;top:351.85px;height:3.2px;background:rgba(58,61,106,0.75)"></i><i style="left:167.02px;top:355.05px;height:3.9px;background:rgba(70,80,140,0.9)"></i><i style="left:167.02px;top:358.95px;height:3.1px;background:rgba(40,42,66,0.85)"></i><i style="left:170.48px;top:351.85px;height:3.2px;background:rgba(47,49,88,0.75)"></i><i style="left:170.48px;top:355.05px;height:3.9px;background:rgba(70,80,140,0.9)"></i><i style="left:170.48px;top:358.95px;height:3.1px;background:rgba(52,58,96,0.85)"></i><i style="left:173.94px;top:351.85px;height:3.2px;background:rgba(35,36,58,0.75)"></i><i style="left:173.94px;top:355.05px;height:3.9px;background:rgba(86,84,150,0.9)"></i><i style="left:173.94px;top:358.95px;height:3.1px;background:rgba(52,58,96,0.85)"></i><i style="left:177.40px;top:351.85px;height:3.2px;background:rgba(8,10,24,1)"></i><i style="left:177.40px;top:355.05px;height:3.9px;background:rgba(25,38,96,1)"></i><i style="left:177.40px;top:358.95px;height:3.1px;background:rgba(60,64,100,0.9)"></i><i style="left:180.86px;top:351.85px;height:3.2px;background:rgba(8,10,24,1)"></i><i style="left:180.86px;top:355.05px;height:3.9px;background:rgba(12,14,30,1)"></i><i style="left:180.86px;top:358.95px;height:3.1px;background:rgba(60,64,100,0.9)"></i><i style="left:184.32px;top:351.85px;height:3.2px;background:rgba(50,52,95,0.75)"></i><i style="left:184.32px;top:355.05px;height:3.9px;background:rgba(92,82,150,0.9)"></i><i style="left:184.32px;top:358.95px;height:3.1px;background:rgba(40,42,66,0.85)"></i><i style="left:187.78px;top:351.85px;height:3.2px;background:rgba(35,36,58,0.75)"></i><i style="left:187.78px;top:355.05px;height:3.9px;background:rgba(86,84,150,0.9)"></i><i style="left:187.78px;top:358.95px;height:3.1px;background:rgba(35,37,58,0.85)"></i><i style="left:191.24px;top:351.85px;height:3.2px;background:rgba(58,61,106,0.75)"></i><i style="left:191.24px;top:355.05px;height:3.9px;background:rgba(86,84,150,0.9)"></i><i style="left:191.24px;top:358.95px;height:3.1px;background:rgba(42,45,72,0.85)"></i><i style="left:194.70px;top:351.85px;height:3.2px;background:rgba(47,49,88,0.75)"></i><i style="left:194.70px;top:355.05px;height:3.9px;background:rgba(70,80,140,0.9)"></i><i style="left:194.70px;top:358.95px;height:3.1px;background:rgba(42,45,72,0.85)"></i><i style="left:198.16px;top:351.85px;height:3.2px;background:rgba(58,61,106,0.75)"></i><i style="left:198.16px;top:355.05px;height:3.9px;background:rgba(120,118,178,0.9)"></i><i style="left:198.16px;top:358.95px;height:3.1px;background:rgba(42,45,72,0.85)"></i><i style="left:201.62px;top:351.85px;height:3.2px;background:rgba(50,52,95,0.75)"></i><i style="left:201.62px;top:355.05px;height:3.9px;background:rgba(108,118,175,0.9)"></i><i style="left:201.62px;top:358.95px;height:3.1px;background:rgba(52,58,96,0.85)"></i><i style="left:205.08px;top:351.85px;height:3.2px;background:rgba(35,36,58,0.75)"></i><i style="left:205.08px;top:355.05px;height:3.9px;background:rgba(76,72,128,0.9)"></i><i style="left:205.08px;top:358.95px;height:3.1px;background:rgba(35,37,58,0.85)"></i><i style="left:208.54px;top:351.85px;height:3.2px;background:rgba(47,49,88,0.75)"></i><i style="left:208.54px;top:355.05px;height:3.9px;background:rgba(104,98,162,0.9)"></i><i style="left:208.54px;top:358.95px;height:3.1px;background:rgba(35,37,58,0.85)"></i><i style="left:212.00px;top:351.85px;height:3.2px;background:rgba(64,66,118,0.75)"></i><i style="left:212.00px;top:355.05px;height:3.9px;background:rgba(110,108,140,0.9)"></i><i style="left:212.00px;top:358.95px;height:3.1px;background:rgba(40,42,66,0.85)"></i><i style="left:215.46px;top:351.85px;height:3.2px;background:rgba(30,32,52,0.75)"></i><i style="left:215.46px;top:355.05px;height:3.9px;background:rgba(98,96,165,0.9)"></i><i style="left:215.46px;top:358.95px;height:3.1px;background:rgba(40,42,66,0.85)"></i><i style="left:218.92px;top:351.85px;height:3.2px;background:rgba(58,61,106,0.75)"></i><i style="left:218.92px;top:355.05px;height:3.9px;background:rgba(70,80,140,0.9)"></i><i style="left:218.92px;top:358.95px;height:3.1px;background:rgba(35,37,58,0.85)"></i><i style="left:222.38px;top:351.85px;height:3.2px;background:rgba(47,49,88,0.75)"></i><i style="left:222.38px;top:355.05px;height:3.9px;background:rgba(110,108,140,0.9)"></i><i style="left:222.38px;top:358.95px;height:3.1px;background:rgba(40,42,66,0.85)"></i><i style="left:39.00px;top:376.85px;height:3.2px;background:rgba(64,66,118,0.75)"></i><i style="left:39.00px;top:380.05px;height:3.9px;background:rgba(110,108,140,0.9)"></i><i style="left:39.00px;top:383.95px;height:3.1px;background:rgba(35,37,58,0.85)"></i><i style="left:42.46px;top:376.85px;height:3.2px;background:rgba(40,42,75,0.75)"></i><i style="left:42.46px;top:380.05px;height:3.9px;background:rgba(86,84,150,0.9)"></i><i style="left:42.46px;top:383.95px;height:3.1px;background:rgba(42,45,72,0.85)"></i><i style="left:45.92px;top:376.85px;height:3.2px;background:rgba(30,32,52,0.75)"></i><i style="left:45.92px;top:380.05px;height:3.9px;background:rgba(76,72,128,0.9)"></i><i style="left:45.92px;top:383.95px;height:3.1px;background:rgba(35,37,58,0.85)"></i><i style="left:49.38px;top:376.85px;height:3.2px;background:rgba(47,49,88,0.75)"></i><i style="left:49.38px;top:380.05px;height:3.9px;background:rgba(108,118,175,0.9)"></i><i style="left:49.38px;top:383.95px;height:3.1px;background:rgba(42,45,72,0.85)"></i><i style="left:52.84px;top:376.85px;height:3.2px;background:rgba(58,61,106,0.75)"></i><i style="left:52.84px;top:380.05px;height:3.9px;background:rgba(76,72,128,0.9)"></i><i style="left:52.84px;top:383.95px;height:3.1px;background:rgba(52,58,96,0.85)"></i><i style="left:56.30px;top:376.85px;height:3.2px;background:rgba(47,49,88,0.75)"></i><i style="left:56.30px;top:380.05px;height:3.9px;background:rgba(120,118,178,0.9)"></i><i style="left:56.30px;top:383.95px;height:3.1px;background:rgba(40,42,66,0.85)"></i><i style="left:59.76px;top:376.85px;height:3.2px;background:rgba(40,42,75,0.75)"></i><i style="left:59.76px;top:380.05px;height:3.9px;background:rgba(108,118,175,0.9)"></i><i style="left:59.76px;top:383.95px;height:3.1px;background:rgba(42,45,72,0.85)"></i><i style="left:63.22px;top:376.85px;height:3.2px;background:rgba(8,10,24,1)"></i><i style="left:63.22px;top:380.05px;height:3.9px;background:rgba(12,14,30,1)"></i><i style="left:63.22px;top:383.95px;height:3.1px;background:rgba(60,64,100,0.9)"></i><i style="left:66.68px;top:376.85px;height:3.2px;background:rgba(35,36,58,0.75)"></i><i style="left:66.68px;top:380.05px;height:3.9px;background:rgba(108,118,175,0.9)"></i><i style="left:66.68px;top:383.95px;height:3.1px;background:rgba(40,42,66,0.85)"></i><i style="left:70.14px;top:376.85px;height:3.2px;background:rgba(30,32,52,0.75)"></i><i style="left:70.14px;top:380.05px;height:3.9px;background:rgba(92,82,150,0.9)"></i><i style="left:70.14px;top:383.95px;height:3.1px;background:rgba(42,45,72,0.85)"></i><i style="left:73.60px;top:376.85px;height:3.2px;background:rgba(64,66,118,0.75)"></i><i style="left:73.60px;top:380.05px;height:3.9px;background:rgba(86,84,150,0.9)"></i><i style="left:73.60px;top:383.95px;height:3.1px;background:rgba(42,45,72,0.85)"></i><i style="left:77.06px;top:376.85px;height:3.2px;background:rgba(64,66,118,0.75)"></i><i style="left:77.06px;top:380.05px;height:3.9px;background:rgba(110,108,140,0.9)"></i><i style="left:77.06px;top:383.95px;height:3.1px;background:rgba(40,42,66,0.85)"></i><i style="left:80.52px;top:376.85px;height:3.2px;background:rgba(35,36,58,0.75)"></i><i style="left:80.52px;top:380.05px;height:3.9px;background:rgba(92,82,150,0.9)"></i><i style="left:80.52px;top:383.95px;height:3.1px;background:rgba(52,58,96,0.85)"></i><i style="left:83.98px;top:376.85px;height:3.2px;background:rgba(58,61,106,0.75)"></i><i style="left:83.98px;top:380.05px;height:3.9px;background:rgba(110,108,140,0.9)"></i><i style="left:83.98px;top:383.95px;height:3.1px;background:rgba(35,37,58,0.85)"></i><i style="left:87.44px;top:376.85px;height:3.2px;background:rgba(58,61,106,0.75)"></i><i style="left:87.44px;top:380.05px;height:3.9px;background:rgba(110,108,140,0.9)"></i><i style="left:87.44px;top:383.95px;height:3.1px;background:rgba(40,42,66,0.85)"></i><i style="left:90.90px;top:376.85px;height:3.2px;background:rgba(50,52,95,0.75)"></i><i style="left:90.90px;top:380.05px;height:3.9px;background:rgba(120,118,178,0.9)"></i><i style="left:90.90px;top:383.95px;height:3.1px;background:rgba(42,45,72,0.85)"></i><i style="left:94.36px;top:376.85px;height:3.2px;background:rgba(50,52,95,0.75)"></i><i style="left:94.36px;top:380.05px;height:3.9px;background:rgba(76,72,128,0.9)"></i><i style="left:94.36px;top:383.95px;height:3.1px;background:rgba(52,58,96,0.85)"></i><i style="left:97.82px;top:376.85px;height:3.2px;background:rgba(30,32,52,0.75)"></i><i style="left:97.82px;top:380.05px;height:3.9px;background:rgba(108,118,175,0.9)"></i><i style="left:97.82px;top:383.95px;height:3.1px;background:rgba(35,37,58,0.85)"></i><i style="left:101.28px;top:376.85px;height:3.2px;background:rgba(47,49,88,0.75)"></i><i style="left:101.28px;top:380.05px;height:3.9px;background:rgba(104,98,162,0.9)"></i><i style="left:101.28px;top:383.95px;height:3.1px;background:rgba(35,37,58,0.85)"></i><i style="left:104.74px;top:376.85px;height:3.2px;background:rgba(35,36,58,0.75)"></i><i style="left:104.74px;top:380.05px;height:3.9px;background:rgba(70,80,140,0.9)"></i><i style="left:104.74px;top:383.95px;height:3.1px;background:rgba(52,58,96,0.85)"></i><i style="left:108.20px;top:376.85px;height:3.2px;background:rgba(40,42,75,0.75)"></i><i style="left:108.20px;top:380.05px;height:3.9px;background:rgba(104,98,162,0.9)"></i><i style="left:108.20px;top:383.95px;height:3.1px;background:rgba(35,37,58,0.85)"></i><i style="left:111.66px;top:376.85px;height:3.2px;background:rgba(47,49,88,0.75)"></i><i style="left:111.66px;top:380.05px;height:3.9px;background:rgba(124,118,170,0.9)"></i><i style="left:111.66px;top:383.95px;height:3.1px;background:rgba(42,45,72,0.85)"></i><i style="left:115.12px;top:376.85px;height:3.2px;background:rgba(50,52,95,0.75)"></i><i style="left:115.12px;top:380.05px;height:3.9px;background:rgba(70,80,140,0.9)"></i><i style="left:115.12px;top:383.95px;height:3.1px;background:rgba(42,45,72,0.85)"></i><i style="left:118.58px;top:376.85px;height:3.2px;background:rgba(64,66,118,0.75)"></i><i style="left:118.58px;top:380.05px;height:3.9px;background:rgba(84,70,112,0.9)"></i><i style="left:118.58px;top:383.95px;height:3.1px;background:rgba(40,42,66,0.85)"></i><i style="left:122.04px;top:376.85px;height:3.2px;background:rgba(35,36,58,0.75)"></i><i style="left:122.04px;top:380.05px;height:3.9px;background:rgba(110,108,140,0.9)"></i><i style="left:122.04px;top:383.95px;height:3.1px;background:rgba(52,58,96,0.85)"></i><i style="left:39.00px;top:401.85px;height:3.2px;background:rgba(50,52,95,0.75)"></i><i style="left:39.00px;top:405.05px;height:3.9px;background:rgba(124,118,170,0.9)"></i><i style="left:39.00px;top:408.95px;height:3.1px;background:rgba(40,42,66,0.85)"></i><i style="left:42.46px;top:401.85px;height:3.2px;background:rgba(30,32,52,0.75)"></i><i style="left:42.46px;top:405.05px;height:3.9px;background:rgba(92,82,150,0.9)"></i><i style="left:42.46px;top:408.95px;height:3.1px;background:rgba(35,37,58,0.85)"></i><i style="left:45.92px;top:401.85px;height:3.2px;background:rgba(35,36,58,0.75)"></i><i style="left:45.92px;top:405.05px;height:3.9px;background:rgba(92,82,150,0.9)"></i><i style="left:45.92px;top:408.95px;height:3.1px;background:rgba(40,42,66,0.85)"></i><i style="left:49.38px;top:401.85px;height:3.2px;background:rgba(47,49,88,0.75)"></i><i style="left:49.38px;top:405.05px;height:3.9px;background:rgba(70,80,140,0.9)"></i><i style="left:49.38px;top:408.95px;height:3.1px;background:rgba(40,42,66,0.85)"></i><i style="left:52.84px;top:401.85px;height:3.2px;background:rgba(47,49,88,0.75)"></i><i style="left:52.84px;top:405.05px;height:3.9px;background:rgba(86,84,150,0.9)"></i><i style="left:52.84px;top:408.95px;height:3.1px;background:rgba(40,42,66,0.85)"></i><i style="left:56.30px;top:401.85px;height:3.2px;background:rgba(35,36,58,0.75)"></i><i style="left:56.30px;top:405.05px;height:3.9px;background:rgba(120,118,178,0.9)"></i><i style="left:56.30px;top:408.95px;height:3.1px;background:rgba(35,37,58,0.85)"></i><i style="left:59.76px;top:401.85px;height:3.2px;background:rgba(8,10,24,1)"></i><i style="left:59.76px;top:405.05px;height:3.9px;background:rgba(12,14,30,1)"></i><i style="left:59.76px;top:408.95px;height:3.1px;background:rgba(60,64,100,0.9)"></i><i style="left:63.22px;top:401.85px;height:3.2px;background:rgba(8,10,24,1)"></i><i style="left:63.22px;top:405.05px;height:3.9px;background:rgba(25,38,96,1)"></i><i style="left:63.22px;top:408.95px;height:3.1px;background:rgba(60,64,100,0.9)"></i><i style="left:66.68px;top:401.85px;height:3.2px;background:rgba(58,61,106,0.75)"></i><i style="left:66.68px;top:405.05px;height:3.9px;background:rgba(104,98,162,0.9)"></i><i style="left:66.68px;top:408.95px;height:3.1px;background:rgba(52,58,96,0.85)"></i><i style="left:70.14px;top:401.85px;height:3.2px;background:rgba(47,49,88,0.75)"></i><i style="left:70.14px;top:405.05px;height:3.9px;background:rgba(110,108,140,0.9)"></i><i style="left:70.14px;top:408.95px;height:3.1px;background:rgba(52,58,96,0.85)"></i><i style="left:73.60px;top:401.85px;height:3.2px;background:rgba(58,61,106,0.75)"></i><i style="left:73.60px;top:405.05px;height:3.9px;background:rgba(124,118,170,0.9)"></i><i style="left:73.60px;top:408.95px;height:3.1px;background:rgba(40,42,66,0.85)"></i><i style="left:77.06px;top:401.85px;height:3.2px;background:rgba(50,52,95,0.75)"></i><i style="left:77.06px;top:405.05px;height:3.9px;background:rgba(108,118,175,0.9)"></i><i style="left:77.06px;top:408.95px;height:3.1px;background:rgba(35,37,58,0.85)"></i><i style="left:80.52px;top:401.85px;height:3.2px;background:rgba(47,49,88,0.75)"></i><i style="left:80.52px;top:405.05px;height:3.9px;background:rgba(124,118,170,0.9)"></i><i style="left:80.52px;top:408.95px;height:3.1px;background:rgba(40,42,66,0.85)"></i><i style="left:83.98px;top:401.85px;height:3.2px;background:rgba(50,52,95,0.75)"></i><i style="left:83.98px;top:405.05px;height:3.9px;background:rgba(70,80,140,0.9)"></i><i style="left:83.98px;top:408.95px;height:3.1px;background:rgba(35,37,58,0.85)"></i><i style="left:87.44px;top:401.85px;height:3.2px;background:rgba(50,52,95,0.75)"></i><i style="left:87.44px;top:405.05px;height:3.9px;background:rgba(98,96,165,0.9)"></i><i style="left:87.44px;top:408.95px;height:3.1px;background:rgba(40,42,66,0.85)"></i><i style="left:90.90px;top:401.85px;height:3.2px;background:rgba(35,36,58,0.75)"></i><i style="left:90.90px;top:405.05px;height:3.9px;background:rgba(92,82,150,0.9)"></i><i style="left:90.90px;top:408.95px;height:3.1px;background:rgba(52,58,96,0.85)"></i><i style="left:94.36px;top:401.85px;height:3.2px;background:rgba(47,49,88,0.75)"></i><i style="left:94.36px;top:405.05px;height:3.9px;background:rgba(98,96,165,0.9)"></i><i style="left:94.36px;top:408.95px;height:3.1px;background:rgba(52,58,96,0.85)"></i><i style="left:97.82px;top:401.85px;height:3.2px;background:rgba(30,32,52,0.75)"></i><i style="left:97.82px;top:405.05px;height:3.9px;background:rgba(120,118,178,0.9)"></i><i style="left:97.82px;top:408.95px;height:3.1px;background:rgba(42,45,72,0.85)"></i><i style="left:101.28px;top:401.85px;height:3.2px;background:rgba(58,61,106,0.75)"></i><i style="left:101.28px;top:405.05px;height:3.9px;background:rgba(110,108,140,0.9)"></i><i style="left:101.28px;top:408.95px;height:3.1px;background:rgba(42,45,72,0.85)"></i><i style="left:104.74px;top:401.85px;height:3.2px;background:rgba(64,66,118,0.75)"></i><i style="left:104.74px;top:405.05px;height:3.9px;background:rgba(70,80,140,0.9)"></i><i style="left:104.74px;top:408.95px;height:3.1px;background:rgba(52,58,96,0.85)"></i><i style="left:108.20px;top:401.85px;height:3.2px;background:rgba(35,36,58,0.75)"></i><i style="left:108.20px;top:405.05px;height:3.9px;background:rgba(92,82,150,0.9)"></i><i style="left:108.20px;top:408.95px;height:3.1px;background:rgba(40,42,66,0.85)"></i><i style="left:111.66px;top:401.85px;height:3.2px;background:rgba(50,52,95,0.75)"></i><i style="left:111.66px;top:405.05px;height:3.9px;background:rgba(104,98,162,0.9)"></i><i style="left:111.66px;top:408.95px;height:3.1px;background:rgba(42,45,72,0.85)"></i><i style="left:115.12px;top:401.85px;height:3.2px;background:rgba(35,36,58,0.75)"></i><i style="left:115.12px;top:405.05px;height:3.9px;background:rgba(120,118,178,0.9)"></i><i style="left:115.12px;top:408.95px;height:3.1px;background:rgba(52,58,96,0.85)"></i><i style="left:118.58px;top:401.85px;height:3.2px;background:rgba(8,10,24,1)"></i><i style="left:118.58px;top:405.05px;height:3.9px;background:rgba(25,38,96,1)"></i><i style="left:118.58px;top:408.95px;height:3.1px;background:rgba(60,64,100,0.9)"></i><i style="left:122.04px;top:401.85px;height:3.2px;background:rgba(8,10,24,1)"></i><i style="left:122.04px;top:405.05px;height:3.9px;background:rgba(25,38,96,1)"></i><i style="left:122.04px;top:408.95px;height:3.1px;background:rgba(60,64,100,0.9)"></i><i style="left:125.50px;top:401.85px;height:3.2px;background:rgba(58,61,106,0.75)"></i><i style="left:125.50px;top:405.05px;height:3.9px;background:rgba(70,80,140,0.9)"></i><i style="left:125.50px;top:408.95px;height:3.1px;background:rgba(40,42,66,0.85)"></i><i style="left:128.96px;top:401.85px;height:3.2px;background:rgba(40,42,75,0.75)"></i><i style="left:128.96px;top:405.05px;height:3.9px;background:rgba(98,96,165,0.9)"></i><i style="left:128.96px;top:408.95px;height:3.1px;background:rgba(35,37,58,0.85)"></i><i style="left:132.42px;top:401.85px;height:3.2px;background:rgba(30,32,52,0.75)"></i><i style="left:132.42px;top:405.05px;height:3.9px;background:rgba(98,96,165,0.9)"></i><i style="left:132.42px;top:408.95px;height:3.1px;background:rgba(40,42,66,0.85)"></i><i style="left:135.88px;top:401.85px;height:3.2px;background:rgba(47,49,88,0.75)"></i><i style="left:135.88px;top:405.05px;height:3.9px;background:rgba(76,72,128,0.9)"></i><i style="left:135.88px;top:408.95px;height:3.1px;background:rgba(40,42,66,0.85)"></i><i style="left:139.34px;top:401.85px;height:3.2px;background:rgba(40,42,75,0.75)"></i><i style="left:139.34px;top:405.05px;height:3.9px;background:rgba(86,84,150,0.9)"></i><i style="left:139.34px;top:408.95px;height:3.1px;background:rgba(35,37,58,0.85)"></i><i style="left:142.80px;top:401.85px;height:3.2px;background:rgba(64,66,118,0.75)"></i><i style="left:142.80px;top:405.05px;height:3.9px;background:rgba(92,82,150,0.9)"></i><i style="left:142.80px;top:408.95px;height:3.1px;background:rgba(42,45,72,0.85)"></i><i style="left:146.26px;top:401.85px;height:3.2px;background:rgba(64,66,118,0.75)"></i><i style="left:146.26px;top:405.05px;height:3.9px;background:rgba(120,118,178,0.9)"></i><i style="left:146.26px;top:408.95px;height:3.1px;background:rgba(40,42,66,0.85)"></i><i style="left:149.72px;top:401.85px;height:3.2px;background:rgba(40,42,75,0.75)"></i><i style="left:149.72px;top:405.05px;height:3.9px;background:rgba(100,92,170,0.9)"></i><i style="left:149.72px;top:408.95px;height:3.1px;background:rgba(52,58,96,0.85)"></i><i style="left:153.18px;top:401.85px;height:3.2px;background:rgba(50,52,95,0.75)"></i><i style="left:153.18px;top:405.05px;height:3.9px;background:rgba(108,118,175,0.9)"></i><i style="left:153.18px;top:408.95px;height:3.1px;background:rgba(35,37,58,0.85)"></i><i style="left:156.64px;top:401.85px;height:3.2px;background:rgba(58,61,106,0.75)"></i><i style="left:156.64px;top:405.05px;height:3.9px;background:rgba(124,118,170,0.9)"></i><i style="left:156.64px;top:408.95px;height:3.1px;background:rgba(40,42,66,0.85)"></i><i style="left:160.10px;top:401.85px;height:3.2px;background:rgba(35,36,58,0.75)"></i><i style="left:160.10px;top:405.05px;height:3.9px;background:rgba(70,80,140,0.9)"></i><i style="left:160.10px;top:408.95px;height:3.1px;background:rgba(52,58,96,0.85)"></i><i style="left:163.56px;top:401.85px;height:3.2px;background:rgba(35,36,58,0.75)"></i><i style="left:163.56px;top:405.05px;height:3.9px;background:rgba(110,108,140,0.9)"></i><i style="left:163.56px;top:408.95px;height:3.1px;background:rgba(52,58,96,0.85)"></i><i style="left:167.02px;top:401.85px;height:3.2px;background:rgba(50,52,95,0.75)"></i><i style="left:167.02px;top:405.05px;height:3.9px;background:rgba(76,72,128,0.9)"></i><i style="left:167.02px;top:408.95px;height:3.1px;background:rgba(35,37,58,0.85)"></i><i style="left:39.00px;top:426.55px;height:3.2px;background:rgba(35,36,58,0.75)"></i><i style="left:39.00px;top:429.75px;height:3.9px;background:rgba(124,118,170,0.9)"></i><i style="left:39.00px;top:433.65px;height:3.1px;background:rgba(40,42,66,0.85)"></i><i style="left:42.46px;top:426.55px;height:3.2px;background:rgba(47,49,88,0.75)"></i><i style="left:42.46px;top:429.75px;height:3.9px;background:rgba(100,92,170,0.9)"></i><i style="left:42.46px;top:433.65px;height:3.1px;background:rgba(35,37,58,0.85)"></i><i style="left:45.92px;top:426.55px;height:3.2px;background:rgba(47,49,88,0.75)"></i><i style="left:45.92px;top:429.75px;height:3.9px;background:rgba(84,70,112,0.9)"></i><i style="left:45.92px;top:433.65px;height:3.1px;background:rgba(40,42,66,0.85)"></i><i style="left:49.38px;top:426.55px;height:3.2px;background:rgba(40,42,75,0.75)"></i><i style="left:49.38px;top:429.75px;height:3.9px;background:rgba(84,70,112,0.9)"></i><i style="left:49.38px;top:433.65px;height:3.1px;background:rgba(40,42,66,0.85)"></i><i style="left:52.84px;top:426.55px;height:3.2px;background:rgba(35,36,58,0.75)"></i><i style="left:52.84px;top:429.75px;height:3.9px;background:rgba(124,118,170,0.9)"></i><i style="left:52.84px;top:433.65px;height:3.1px;background:rgba(40,42,66,0.85)"></i><i style="left:56.30px;top:426.55px;height:3.2px;background:rgba(58,61,106,0.75)"></i><i style="left:56.30px;top:429.75px;height:3.9px;background:rgba(86,84,150,0.9)"></i><i style="left:56.30px;top:433.65px;height:3.1px;background:rgba(35,37,58,0.85)"></i><i style="left:59.76px;top:426.55px;height:3.2px;background:rgba(58,61,106,0.75)"></i><i style="left:59.76px;top:429.75px;height:3.9px;background:rgba(92,82,150,0.9)"></i><i style="left:59.76px;top:433.65px;height:3.1px;background:rgba(35,37,58,0.85)"></i><i style="left:63.22px;top:426.55px;height:3.2px;background:rgba(35,36,58,0.75)"></i><i style="left:63.22px;top:429.75px;height:3.9px;background:rgba(86,84,150,0.9)"></i><i style="left:63.22px;top:433.65px;height:3.1px;background:rgba(42,45,72,0.85)"></i><i style="left:66.68px;top:426.55px;height:3.2px;background:rgba(35,36,58,0.75)"></i><i style="left:66.68px;top:429.75px;height:3.9px;background:rgba(84,70,112,0.9)"></i><i style="left:66.68px;top:433.65px;height:3.1px;background:rgba(52,58,96,0.85)"></i><i style="left:70.14px;top:426.55px;height:3.2px;background:rgba(8,10,24,1)"></i><i style="left:70.14px;top:429.75px;height:3.9px;background:rgba(12,14,30,1)"></i><i style="left:70.14px;top:433.65px;height:3.1px;background:rgba(60,64,100,0.9)"></i><i style="left:73.60px;top:426.55px;height:3.2px;background:rgba(8,10,24,1)"></i><i style="left:73.60px;top:429.75px;height:3.9px;background:rgba(25,38,96,1)"></i><i style="left:73.60px;top:433.65px;height:3.1px;background:rgba(60,64,100,0.9)"></i><i style="left:77.06px;top:426.55px;height:3.2px;background:rgba(64,66,118,0.75)"></i><i style="left:77.06px;top:429.75px;height:3.9px;background:rgba(86,84,150,0.9)"></i><i style="left:77.06px;top:433.65px;height:3.1px;background:rgba(35,37,58,0.85)"></i><i style="left:80.52px;top:426.55px;height:3.2px;background:rgba(50,52,95,0.75)"></i><i style="left:80.52px;top:429.75px;height:3.9px;background:rgba(70,80,140,0.9)"></i><i style="left:80.52px;top:433.65px;height:3.1px;background:rgba(52,58,96,0.85)"></i><i style="left:83.98px;top:426.55px;height:3.2px;background:rgba(30,32,52,0.75)"></i><i style="left:83.98px;top:429.75px;height:3.9px;background:rgba(108,118,175,0.9)"></i><i style="left:83.98px;top:433.65px;height:3.1px;background:rgba(40,42,66,0.85)"></i><i style="left:87.44px;top:426.55px;height:3.2px;background:rgba(35,36,58,0.75)"></i><i style="left:87.44px;top:429.75px;height:3.9px;background:rgba(104,98,162,0.9)"></i><i style="left:87.44px;top:433.65px;height:3.1px;background:rgba(52,58,96,0.85)"></i><i style="left:90.90px;top:426.55px;height:3.2px;background:rgba(58,61,106,0.75)"></i><i style="left:90.90px;top:429.75px;height:3.9px;background:rgba(76,72,128,0.9)"></i><i style="left:90.90px;top:433.65px;height:3.1px;background:rgba(35,37,58,0.85)"></i><i style="left:94.36px;top:426.55px;height:3.2px;background:rgba(47,49,88,0.75)"></i><i style="left:94.36px;top:429.75px;height:3.9px;background:rgba(70,80,140,0.9)"></i><i style="left:94.36px;top:433.65px;height:3.1px;background:rgba(35,37,58,0.85)"></i><i style="left:97.82px;top:426.55px;height:3.2px;background:rgba(8,10,24,1)"></i><i style="left:97.82px;top:429.75px;height:3.9px;background:rgba(25,38,96,1)"></i><i style="left:97.82px;top:433.65px;height:3.1px;background:rgba(60,64,100,0.9)"></i><i style="left:101.28px;top:426.55px;height:3.2px;background:rgba(8,10,24,1)"></i><i style="left:101.28px;top:429.75px;height:3.9px;background:rgba(12,14,30,1)"></i><i style="left:101.28px;top:433.65px;height:3.1px;background:rgba(60,64,100,0.9)"></i><i style="left:104.74px;top:426.55px;height:3.2px;background:rgba(50,52,95,0.75)"></i><i style="left:104.74px;top:429.75px;height:3.9px;background:rgba(110,108,140,0.9)"></i><i style="left:104.74px;top:433.65px;height:3.1px;background:rgba(40,42,66,0.85)"></i><i style="left:108.20px;top:426.55px;height:3.2px;background:rgba(40,42,75,0.75)"></i><i style="left:108.20px;top:429.75px;height:3.9px;background:rgba(124,118,170,0.9)"></i><i style="left:108.20px;top:433.65px;height:3.1px;background:rgba(42,45,72,0.85)"></i><i style="left:111.66px;top:426.55px;height:3.2px;background:rgba(47,49,88,0.75)"></i><i style="left:111.66px;top:429.75px;height:3.9px;background:rgba(120,118,178,0.9)"></i><i style="left:111.66px;top:433.65px;height:3.1px;background:rgba(40,42,66,0.85)"></i><i style="left:115.12px;top:426.55px;height:3.2px;background:rgba(50,52,95,0.75)"></i><i style="left:115.12px;top:429.75px;height:3.9px;background:rgba(84,70,112,0.9)"></i><i style="left:115.12px;top:433.65px;height:3.1px;background:rgba(42,45,72,0.85)"></i><i style="left:118.58px;top:426.55px;height:3.2px;background:rgba(58,61,106,0.75)"></i><i style="left:118.58px;top:429.75px;height:3.9px;background:rgba(100,92,170,0.9)"></i><i style="left:118.58px;top:433.65px;height:3.1px;background:rgba(35,37,58,0.85)"></i><i style="left:122.04px;top:426.55px;height:3.2px;background:rgba(40,42,75,0.75)"></i><i style="left:122.04px;top:429.75px;height:3.9px;background:rgba(76,72,128,0.9)"></i><i style="left:122.04px;top:433.65px;height:3.1px;background:rgba(42,45,72,0.85)"></i><i style="left:125.50px;top:426.55px;height:3.2px;background:rgba(30,32,52,0.75)"></i><i style="left:125.50px;top:429.75px;height:3.9px;background:rgba(110,108,140,0.9)"></i><i style="left:125.50px;top:433.65px;height:3.1px;background:rgba(40,42,66,0.85)"></i><i style="left:128.96px;top:426.55px;height:3.2px;background:rgba(47,49,88,0.75)"></i><i style="left:128.96px;top:429.75px;height:3.9px;background:rgba(86,84,150,0.9)"></i><i style="left:128.96px;top:433.65px;height:3.1px;background:rgba(42,45,72,0.85)"></i><i style="left:132.42px;top:426.55px;height:3.2px;background:rgba(47,49,88,0.75)"></i><i style="left:132.42px;top:429.75px;height:3.9px;background:rgba(100,92,170,0.9)"></i><i style="left:132.42px;top:433.65px;height:3.1px;background:rgba(35,37,58,0.85)"></i><i style="left:135.88px;top:426.55px;height:3.2px;background:rgba(40,42,75,0.75)"></i><i style="left:135.88px;top:429.75px;height:3.9px;background:rgba(108,118,175,0.9)"></i><i style="left:135.88px;top:433.65px;height:3.1px;background:rgba(52,58,96,0.85)"></i><i style="left:139.34px;top:426.55px;height:3.2px;background:rgba(58,61,106,0.75)"></i><i style="left:139.34px;top:429.75px;height:3.9px;background:rgba(76,72,128,0.9)"></i><i style="left:139.34px;top:433.65px;height:3.1px;background:rgba(52,58,96,0.85)"></i><i style="left:142.80px;top:426.55px;height:3.2px;background:rgba(40,42,75,0.75)"></i><i style="left:142.80px;top:429.75px;height:3.9px;background:rgba(76,72,128,0.9)"></i><i style="left:142.80px;top:433.65px;height:3.1px;background:rgba(40,42,66,0.85)"></i><i style="left:146.26px;top:426.55px;height:3.2px;background:rgba(64,66,118,0.75)"></i><i style="left:146.26px;top:429.75px;height:3.9px;background:rgba(92,82,150,0.9)"></i><i style="left:146.26px;top:433.65px;height:3.1px;background:rgba(42,45,72,0.85)"></i><i style="left:149.72px;top:426.55px;height:3.2px;background:rgba(47,49,88,0.75)"></i><i style="left:149.72px;top:429.75px;height:3.9px;background:rgba(70,80,140,0.9)"></i><i style="left:149.72px;top:433.65px;height:3.1px;background:rgba(35,37,58,0.85)"></i><i style="left:153.18px;top:426.55px;height:3.2px;background:rgba(50,52,95,0.75)"></i><i style="left:153.18px;top:429.75px;height:3.9px;background:rgba(70,80,140,0.9)"></i><i style="left:153.18px;top:433.65px;height:3.1px;background:rgba(35,37,58,0.85)"></i><i style="left:156.64px;top:426.55px;height:3.2px;background:rgba(30,32,52,0.75)"></i><i style="left:156.64px;top:429.75px;height:3.9px;background:rgba(104,98,162,0.9)"></i><i style="left:156.64px;top:433.65px;height:3.1px;background:rgba(42,45,72,0.85)"></i><i style="left:160.10px;top:426.55px;height:3.2px;background:rgba(47,49,88,0.75)"></i><i style="left:160.10px;top:429.75px;height:3.9px;background:rgba(86,84,150,0.9)"></i><i style="left:160.10px;top:433.65px;height:3.1px;background:rgba(52,58,96,0.85)"></i><i style="left:163.56px;top:426.55px;height:3.2px;background:rgba(50,52,95,0.75)"></i><i style="left:163.56px;top:429.75px;height:3.9px;background:rgba(70,80,140,0.9)"></i><i style="left:163.56px;top:433.65px;height:3.1px;background:rgba(52,58,96,0.85)"></i><i style="left:167.02px;top:426.55px;height:3.2px;background:rgba(64,66,118,0.75)"></i><i style="left:167.02px;top:429.75px;height:3.9px;background:rgba(84,70,112,0.9)"></i><i style="left:167.02px;top:433.65px;height:3.1px;background:rgba(40,42,66,0.85)"></i><i style="left:170.48px;top:426.55px;height:3.2px;background:rgba(40,42,75,0.75)"></i><i style="left:170.48px;top:429.75px;height:3.9px;background:rgba(84,70,112,0.9)"></i><i style="left:170.48px;top:433.65px;height:3.1px;background:rgba(35,37,58,0.85)"></i><i style="left:173.94px;top:426.55px;height:3.2px;background:rgba(47,49,88,0.75)"></i><i style="left:173.94px;top:429.75px;height:3.9px;background:rgba(120,118,178,0.9)"></i><i style="left:173.94px;top:433.65px;height:3.1px;background:rgba(52,58,96,0.85)"></i><i style="left:177.40px;top:426.55px;height:3.2px;background:rgba(47,49,88,0.75)"></i><i style="left:177.40px;top:429.75px;height:3.9px;background:rgba(108,118,175,0.9)"></i><i style="left:177.40px;top:433.65px;height:3.1px;background:rgba(35,37,58,0.85)"></i><i style="left:180.86px;top:426.55px;height:3.2px;background:rgba(50,52,95,0.75)"></i><i style="left:180.86px;top:429.75px;height:3.9px;background:rgba(76,72,128,0.9)"></i><i style="left:180.86px;top:433.65px;height:3.1px;background:rgba(40,42,66,0.85)"></i>
<div class="bar" style="left:267.90px;top:217.90px;width:3.00px;height:18.8px;background:#2aa66c"></div><div class="bar" style="left:281.90px;top:217.90px;width:11.00px;height:18.8px;background:#2aa66c"><span>2</span></div><div class="bar" style="left:295.90px;top:217.90px;width:10.20px;height:18.8px;background:#2aa66c"><span>2</span></div><div class="bar" style="left:309.90px;top:217.90px;width:4.00px;height:18.8px;background:#2aa66c"></div><div class="bar" style="left:324.80px;top:217.90px;width:3.30px;height:18.8px;background:#2aa66c"></div><div class="bar" style="left:345.90px;top:217.90px;width:4.20px;height:18.8px;background:#2aa66c"></div><div class="bar" style="left:409.00px;top:217.90px;width:9.00px;height:18.8px;background:#2aa66c"><span>2</span></div><div class="bar" style="left:423.00px;top:217.90px;width:3.00px;height:18.8px;background:#2aa66c"></div><div class="bar" style="left:493.90px;top:217.90px;width:10.10px;height:18.8px;background:#2aa66c"><span>2</span></div><div class="bar" style="left:522.00px;top:217.90px;width:9.00px;height:18.8px;background:#2aa66c"><span>2</span></div><div class="bar" style="left:558.00px;top:217.90px;width:8.90px;height:18.8px;background:#2aa66c"><span>2</span></div><div class="bar" style="left:590.80px;top:217.90px;width:3.30px;height:18.8px;background:#2aa66c"></div><div class="bar" style="left:641.90px;top:217.90px;width:9.20px;height:18.8px;background:#2aa66c"><span>2</span></div><div class="bar" style="left:745.90px;top:217.90px;width:4.20px;height:18.8px;background:#2aa66c"></div><div class="bar" style="left:796.00px;top:217.90px;width:3.20px;height:18.8px;background:#2aa66c"></div><div class="bar" style="left:810.00px;top:217.90px;width:4.20px;height:18.8px;background:#2aa66c"></div><div class="bar" style="left:824.90px;top:217.90px;width:3.20px;height:18.8px;background:#2aa66c"></div><div class="bar" style="left:837.90px;top:217.90px;width:4.20px;height:18.8px;background:#2aa66c"></div><div class="bar" style="left:417.80px;top:243.40px;width:3.20px;height:18.8px;background:#2aa66c"></div><div class="bar" style="left:565.80px;top:243.40px;width:3.20px;height:18.8px;background:#2aa66c"></div><div class="bar" style="left:649.90px;top:243.40px;width:3.30px;height:18.8px;background:#2aa66c"></div><div class="bar" style="left:749.00px;top:243.40px;width:3.20px;height:18.8px;background:#2aa66c"></div><div class="bar" style="left:812.00px;top:243.40px;width:3.10px;height:18.8px;background:#2aa66c"></div><div class="bar" style="left:825.80px;top:243.40px;width:4.20px;height:18.8px;background:#2aa66c"></div><div class="bar" style="left:839.80px;top:243.40px;width:3.20px;height:18.8px;background:#2aa66c"></div><div class="bar" style="left:291.00px;top:268.90px;width:10.10px;height:18.8px;background:#2aa66c"><span>2</span></div><div class="bar" style="left:305.00px;top:268.90px;width:37.00px;height:18.8px;background:#2aa66c"><span>2</span></div><div class="bar" style="left:346.60px;top:268.90px;width:3.50px;height:18.8px;background:#2aa66c"></div><div class="bar" style="left:401.90px;top:268.90px;width:12.10px;height:18.8px;background:#2aa66c"><span>2</span></div><div class="bar" style="left:424.90px;top:268.90px;width:3.20px;height:18.8px;background:#2aa66c"></div><div class="bar" style="left:501.90px;top:268.90px;width:4.20px;height:18.8px;background:#2aa66c"></div><div class="bar" style="left:558.00px;top:268.90px;width:4.00px;height:18.8px;background:#2aa66c"></div><div class="bar" style="left:642.80px;top:268.90px;width:3.30px;height:18.8px;background:#2aa66c"></div><div class="bar" style="left:749.70px;top:268.90px;width:3.30px;height:18.8px;background:#2aa66c"></div><div class="bar" style="left:813.00px;top:268.90px;width:3.10px;height:18.8px;background:#2aa66c"></div><div class="bar" style="left:825.80px;top:268.90px;width:4.20px;height:18.8px;background:#2aa66c"></div><div class="bar" style="left:839.80px;top:268.90px;width:3.20px;height:18.8px;background:#2aa66c"></div><div class="bar" style="left:260.80px;top:294.40px;width:10.10px;height:18.8px;background:#2aa66c"><span>2</span></div><div class="bar" style="left:274.90px;top:294.40px;width:11.10px;height:18.8px;background:#2aa66c"><span>2</span></div><div class="bar" style="left:291.00px;top:294.40px;width:10.10px;height:18.8px;background:#2aa66c"><span>2</span></div><div class="bar" style="left:305.90px;top:294.40px;width:9.20px;height:18.8px;background:#2aa66c"><span>2</span></div><div class="bar" style="left:316.80px;top:294.40px;width:12.80px;height:18.8px;background:#2aa66c"><span>2</span></div><div class="bar" style="left:331.00px;top:294.40px;width:11.00px;height:18.8px;background:#2aa66c"><span>2</span></div><div class="bar" style="left:353.00px;top:294.40px;width:9.90px;height:18.8px;background:#2aa66c"><span>2</span></div><div class="bar" style="left:374.00px;top:294.40px;width:9.90px;height:18.8px;background:#2aa66c"><span>2</span></div><div class="bar" style="left:388.00px;top:294.40px;width:9.90px;height:18.8px;background:#2aa66c"><span>2</span></div><div class="bar" style="left:401.90px;top:294.40px;width:12.10px;height:18.8px;background:#2aa66c"><span>2</span></div><div class="bar" style="left:418.00px;top:294.40px;width:9.90px;height:18.8px;background:#2aa66c"><span>2</span></div><div class="bar" style="left:444.00px;top:294.40px;width:10.10px;height:18.8px;background:#2aa66c"><span>2</span></div><div class="bar" style="left:457.90px;top:294.40px;width:10.10px;height:18.8px;background:#2aa66c"><span>2</span></div><div class="bar" style="left:471.90px;top:294.40px;width:10.10px;height:18.8px;background:#2aa66c"><span>2</span></div><div class="bar" style="left:486.00px;top:294.40px;width:11.90px;height:18.8px;background:#2aa66c"><span>2</span></div><div class="bar" style="left:501.90px;top:294.40px;width:10.10px;height:18.8px;background:#2aa66c"><span>2</span></div><div class="bar" style="left:514.00px;top:294.40px;width:12.00px;height:18.8px;background:#2aa66c"><span>2</span></div><div class="bar" style="left:528.90px;top:294.40px;width:9.00px;height:18.8px;background:#2aa66c"><span>2</span></div><div class="bar" style="left:541.90px;top:294.40px;width:4.00px;height:18.8px;background:#2aa66c"></div><div class="bar" style="left:558.90px;top:294.40px;width:9.90px;height:18.8px;background:#2aa66c"><span>2</span></div><div class="bar" style="left:570.00px;top:294.40px;width:10.90px;height:18.8px;background:#2aa66c"><span>2</span></div><div class="bar" style="left:584.90px;top:294.40px;width:9.90px;height:18.8px;background:#2aa66c"><span>2</span></div><div class="bar" style="left:605.90px;top:294.40px;width:3.30px;height:18.8px;background:#2aa66c"></div><div class="bar" style="left:619.90px;top:294.40px;width:10.10px;height:18.8px;background:#2aa66c"><span>2</span></div><div class="bar" style="left:633.90px;top:294.40px;width:12.00px;height:18.8px;background:#2aa66c"><span>2</span></div><div class="bar" style="left:649.90px;top:294.40px;width:9.00px;height:18.8px;background:#2aa66c"><span>2</span></div><div class="bar" style="left:670.00px;top:294.40px;width:9.00px;height:18.8px;background:#2aa66c"><span>2</span></div><div class="bar" style="left:683.00px;top:294.40px;width:3.20px;height:18.8px;background:#2aa66c"></div><div class="bar" style="left:697.90px;top:294.40px;width:3.20px;height:18.8px;background:#2aa66c"></div><div class="bar" style="left:710.90px;top:294.40px;width:3.20px;height:18.8px;background:#2aa66c"></div><div class="bar" style="left:732.90px;top:294.40px;width:10.10px;height:18.8px;background:#2aa66c"><span>2</span></div><div class="bar" style="left:749.70px;top:294.40px;width:3.30px;height:18.8px;background:#2aa66c"></div><div class="bar" style="left:775.00px;top:294.40px;width:11.00px;height:18.8px;background:#2aa66c"><span>2</span></div><div class="bar" style="left:796.00px;top:294.40px;width:3.20px;height:18.8px;background:#2aa66c"></div><div class="bar" style="left:812.80px;top:294.40px;width:3.30px;height:18.8px;background:#2aa66c"></div><div class="bar" style="left:826.80px;top:294.40px;width:10.10px;height:18.8px;background:#2aa66c"><span>2</span></div><div class="bar" style="left:909.00px;top:294.40px;width:10.10px;height:18.8px;background:#2aa66c"><span>2</span></div><div class="bar" style="left:922.90px;top:294.40px;width:3.10px;height:18.8px;background:#2aa66c"></div><div class="bar" style="left:944.00px;top:294.40px;width:9.90px;height:18.8px;background:#2aa66c"><span>2</span></div><div class="bar" style="left:971.90px;top:294.40px;width:3.10px;height:18.8px;background:#2aa66c"></div><div class="bar" style="left:985.90px;top:294.40px;width:3.00px;height:18.8px;background:#2aa66c"></div><div class="bar" style="left:410.00px;top:319.90px;width:9.90px;height:18.8px;background:#2aa66c"><span>2</span></div><div class="bar" style="left:424.90px;top:319.90px;width:3.10px;height:18.8px;background:#2aa66c"></div><div class="bar" style="left:305.00px;top:319.90px;width:3.00px;height:18.8px;background:#d8493b"></div><div class="bar" style="left:326.00px;top:319.90px;width:3.10px;height:18.8px;background:#2aa66c"></div><div class="bar" style="left:347.00px;top:319.90px;width:5.00px;height:18.8px;background:#2aa66c"></div><div class="bar" style="left:493.90px;top:319.90px;width:11.10px;height:18.8px;background:#2aa66c"><span>2</span></div><div class="bar" style="left:522.00px;top:319.90px;width:9.90px;height:18.8px;background:#2aa66c"><span>2</span></div><div class="bar" style="left:558.00px;top:319.90px;width:9.90px;height:18.8px;background:#2aa66c"><span>2</span></div><div class="bar" style="left:641.90px;top:319.90px;width:10.10px;height:18.8px;background:#2aa66c"><span>2</span></div><div class="bar" style="left:748.00px;top:319.90px;width:3.00px;height:18.8px;background:#2aa66c"></div><div class="bar" style="left:811.90px;top:319.90px;width:3.20px;height:18.8px;background:#2aa66c"></div><div class="bar" style="left:825.80px;top:319.90px;width:3.30px;height:18.8px;background:#2aa66c"></div><div class="bar" style="left:838.80px;top:319.90px;width:3.30px;height:18.8px;background:#2aa66c"></div><div class="bar" style="left:256.00px;top:345.40px;width:2.90px;height:18.8px;background:#2aa66c"></div><div class="bar" style="left:624.90px;top:345.40px;width:53.10px;height:18.8px;background:#2aa66c"></div><div class="bar" style="left:1046.00px;top:345.40px;width:52.00px;height:18.8px;background:#2aa66c"></div><div class="bar" style="left:290.00px;top:370.90px;width:3.10px;height:18.8px;background:#2aa66c"></div><div class="bar" style="left:304.00px;top:370.90px;width:3.10px;height:18.8px;background:#2aa66c"></div><div class="bar" style="left:326.00px;top:370.90px;width:3.10px;height:18.8px;background:#2aa66c"></div><div class="bar" style="left:345.90px;top:370.90px;width:4.20px;height:18.8px;background:#2aa66c"></div><div class="bar" style="left:410.00px;top:370.90px;width:9.90px;height:18.8px;background:#2aa66c"><span>2</span></div><div class="bar" style="left:423.90px;top:370.90px;width:3.10px;height:18.8px;background:#2aa66c"></div><div class="bar" style="left:500.90px;top:370.90px;width:3.10px;height:18.8px;background:#2aa66c"></div><div class="bar" style="left:558.00px;top:370.90px;width:9.90px;height:18.8px;background:#2aa66c"><span>2</span></div><div class="bar" style="left:641.90px;top:370.90px;width:10.10px;height:18.8px;background:#2aa66c"><span>2</span></div><div class="bar" style="left:748.00px;top:370.90px;width:3.00px;height:18.8px;background:#2aa66c"></div><div class="bar" style="left:810.90px;top:370.90px;width:3.30px;height:18.8px;background:#2aa66c"></div><div class="bar" style="left:825.80px;top:370.90px;width:3.30px;height:18.8px;background:#2aa66c"></div><div class="bar" style="left:838.80px;top:370.90px;width:3.30px;height:18.8px;background:#2aa66c"></div><div class="bar" style="left:305.90px;top:396.40px;width:8.10px;height:18.8px;background:#2aa66c"></div><div class="bar" style="left:727.00px;top:396.40px;width:4.90px;height:18.8px;background:#2aa66c"></div><div class="bar" style="left:291.00px;top:421.90px;width:3.10px;height:18.8px;background:#2aa66c"></div><div class="bar" style="left:305.90px;top:421.90px;width:3.10px;height:18.8px;background:#2aa66c"></div><div class="bar" style="left:327.00px;top:421.90px;width:3.00px;height:18.8px;background:#2aa66c"></div><div class="bar" style="left:347.00px;top:421.90px;width:3.10px;height:18.8px;background:#2aa66c"></div><div class="bar" style="left:410.90px;top:421.90px;width:3.10px;height:18.8px;background:#2aa66c"></div><div class="bar" style="left:425.80px;top:421.90px;width:3.10px;height:18.8px;background:#2aa66c"></div><div class="bar" style="left:501.90px;top:421.90px;width:4.20px;height:18.8px;background:#2aa66c"></div><div class="bar" style="left:558.90px;top:421.90px;width:3.10px;height:18.8px;background:#2aa66c"></div><div class="bar" style="left:642.80px;top:421.90px;width:3.30px;height:18.8px;background:#2aa66c"></div><div class="bar" style="left:749.90px;top:421.90px;width:3.10px;height:18.8px;background:#2aa66c"></div><div class="bar" style="left:814.00px;top:421.90px;width:3.00px;height:18.8px;background:#2aa66c"></div><div class="bar" style="left:826.80px;top:421.90px;width:3.20px;height:18.8px;background:#2aa66c"></div><div class="bar" style="left:840.90px;top:421.90px;width:3.10px;height:18.8px;background:#2aa66c"></div><div class="bar" style="left:290px;top:319.90px;width:10px;height:18.8px;background:linear-gradient(90deg,#d8493b 0 50%,#2aa66c 50% 100%)"><span>2</span></div>
<div class="abs" style="left:0;top:93.2px;width:1.3px;height:651px;background:#0d1120"></div>
</div></body></html>
